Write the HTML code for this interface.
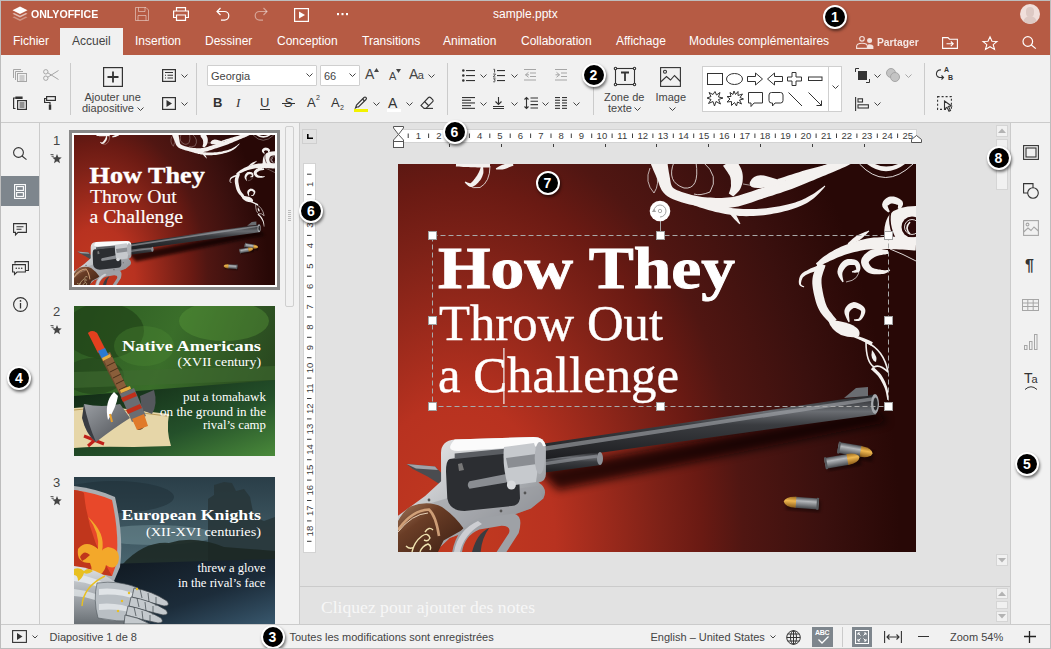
<!DOCTYPE html>
<html><head><meta charset="utf-8">
<style>
*{box-sizing:border-box;margin:0;padding:0}
html,body{width:1051px;height:649px;overflow:hidden;background:#f1f1f1;font-family:"Liberation Sans",sans-serif;color:#444}
.a{position:absolute}
svg{position:absolute;overflow:visible}
#frame{position:absolute;left:0;top:0;width:1051px;height:649px;border:1px solid #bdbdbd;pointer-events:none;z-index:100}
#hdr{left:1px;top:1px;width:1049px;height:54px;background:#b65b44}
#tb{left:1px;top:55px;width:1049px;height:68px;background:#f1f1f1;border-bottom:1px solid #cbcbcb}
#lsb{left:1px;top:123px;width:39px;height:501px;background:#f1f1f1;border-right:1px solid #cbcbcb}
#thumbs{left:40px;top:123px;width:260px;height:501px;background:#f1f1f1;border-right:1px solid #cbcbcb;overflow:hidden}
#edit{left:300px;top:123px;width:710px;height:501px;background:#e2e2e2;overflow:hidden}
#rsb{left:1010px;top:123px;width:40px;height:501px;background:#f1f1f1;border-left:1px solid #cbcbcb}
#status{left:1px;top:624px;width:1049px;height:24px;background:#f1f1f1;border-top:1px solid #cbcbcb}
.tab{position:absolute;top:33.7px;font-size:12px;color:#fff;line-height:14px;white-space:nowrap}
.t11{position:absolute;font-size:11px;line-height:13px;white-space:nowrap;color:#444}
.sep{position:absolute;width:1px;background:#cbcbcb}
.badge{position:absolute;width:24px;height:24px;border-radius:50%;background:#000;border:2px solid #fff;box-shadow:1px 2px 3px rgba(0,0,0,.55);color:#fff;font:bold 14px/20px "Liberation Sans",sans-serif;text-align:center;z-index:50}
</style></head><body>
<div id="frame"></div>
<!-- HEADER -->
<div id="hdr" class="a"></div>
<!-- logo -->
<svg style="left:12px;top:6px" width="16" height="17" viewBox="0 0 16 17">
 <path d="M8 0.5 L15.5 4.3 L8 8.1 L0.5 4.3 Z" fill="#fff"/>
 <path d="M2.2 6.9 L0.5 7.8 L8 11.6 L15.5 7.8 L13.8 6.9 L8 9.8 Z" fill="#fff" opacity=".6"/>
 <path d="M2.2 10.4 L0.5 11.3 L8 15.1 L15.5 11.3 L13.8 10.4 L8 13.3 Z" fill="#fff" opacity=".35"/>
</svg>
<div class="a" style="left:31px;top:7px;font:bold 11.5px/14px 'Liberation Sans',sans-serif;color:#fff;transform:scaleX(0.92);transform-origin:0 0;letter-spacing:0">ONLYOFFICE</div>
<!-- save (faded) -->
<svg style="left:135px;top:7px" width="14" height="14" viewBox="0 0 14 14" fill="none" stroke="#fff" stroke-opacity=".45" stroke-width="1">
 <path d="M0.5 0.5 H11 L13.5 3 V13.5 H0.5 Z"/><path d="M3.5 0.5 V4.5 H10 V0.5"/><path d="M3 13.5 V8.5 H11 V13.5"/>
</svg>
<!-- print -->
<svg style="left:173px;top:7px" width="16" height="14" viewBox="0 0 16 14" fill="none" stroke="#fff" stroke-width="1.2">
 <path d="M3.5 4 V0.6 H12.5 V4"/><path d="M3.5 10.5 H0.6 V4 H15.4 V10.5 H12.5"/><path d="M3.5 8 H12.5 V13.4 H3.5 Z"/>
</svg>
<!-- undo -->
<svg style="left:216px;top:7px" width="14" height="14" viewBox="0 0 14 14" fill="none" stroke="#fff" stroke-width="1.2">
 <path d="M4.5 1 L1 4.5 L4.5 8"/><path d="M1 4.5 H8.5 A4.3 4.3 0 0 1 8.5 13.1 H5"/>
</svg>
<!-- redo faded -->
<svg style="left:254px;top:7px" width="14" height="14" viewBox="0 0 14 14" fill="none" stroke="#fff" stroke-opacity=".45" stroke-width="1.2">
 <path d="M9.5 1 L13 4.5 L9.5 8"/><path d="M13 4.5 H5.5 A4.3 4.3 0 0 0 5.5 13.1 H9"/>
</svg>
<!-- slideshow -->
<svg style="left:294px;top:8px" width="15" height="14" viewBox="0 0 15 14" fill="none" stroke="#fff" stroke-width="1.2">
 <rect x="0.6" y="0.6" width="13.8" height="12.8"/><path d="M5 3.5 L11 7 L5 10.5 Z" fill="#fff" stroke="none"/>
</svg>
<!-- dots -->
<svg style="left:337px;top:13px" width="11" height="3" viewBox="0 0 11 3" fill="#fff">
 <rect x="0" y="0" width="2" height="2.2"/><rect x="4.5" y="0" width="2" height="2.2"/><rect x="9" y="0" width="2" height="2.2"/>
</svg>
<div class="a" style="left:493px;top:7px;font-size:12px;line-height:14px;color:#fff">sample.pptx</div>
<!-- avatar -->
<div class="a" style="left:1020px;top:4px;width:20px;height:20px;border-radius:50%;background:#f0dfdb;overflow:hidden">
 <div class="a" style="left:6px;top:3px;width:8px;height:10px;border-radius:4px;background:#ddc9c4"></div>
 <div class="a" style="left:3px;top:12px;width:14px;height:10px;border-radius:7px 7px 0 0;background:#ddc9c4"></div>
</div>
<!-- TABS -->
<div class="tab" style="left:13px">Fichier</div>
<div class="a" style="left:60px;top:28px;width:63px;height:27px;background:#f1f1f1"></div>
<div class="tab" style="left:72px;color:#444">Accueil</div>
<div class="tab" style="left:135px">Insertion</div>
<div class="tab" style="left:205px">Dessiner</div>
<div class="tab" style="left:277px">Conception</div>
<div class="tab" style="left:362px">Transitions</div>
<div class="tab" style="left:443px">Animation</div>
<div class="tab" style="left:521px">Collaboration</div>
<div class="tab" style="left:616px">Affichage</div>
<div class="tab" style="left:689px">Modules complémentaires</div>
<!-- share icon -->
<svg style="left:856px;top:36px" width="18" height="13" viewBox="0 0 18 13" fill="none" stroke="#f3e2de" stroke-width="1.1">
 <circle cx="6" cy="2.8" r="2.3"/><path d="M0.6 12.4 V10.5 Q0.6 7.2 6 7.2 Q11.4 7.2 11.4 10.5 V12.4 Z"/>
 <circle cx="13.6" cy="4.4" r="2.5" fill="#f3e2de" stroke="none"/><path d="M11.5 13 V9.5 Q11.5 8.2 13.6 8.2 Q16.5 8.2 17.4 10 V13 Z" fill="#f3e2de" stroke="none"/>
</svg>
<div class="a" style="left:877px;top:35px;font:bold 11px/14px 'Liberation Sans',sans-serif;color:rgba(255,255,255,.86);transform:scaleX(0.935);transform-origin:0 0">Partager</div>
<!-- open location -->
<svg style="left:942px;top:37px" width="16" height="12" viewBox="0 0 16 12" fill="none" stroke="#fff" stroke-width="1.1">
 <path d="M0.6 11.4 V0.6 H6 L7.5 2.2 H15.4 V11.4 Z"/><path d="M4.5 6.8 H11 M8.8 4.5 L11.2 6.8 L8.8 9.1"/>
</svg>
<!-- star -->
<svg style="left:982px;top:36px" width="16" height="14" viewBox="0 0 16 14" fill="none" stroke="#fff" stroke-width="1.1">
 <path d="M8 0.8 L10 5.2 L15 5.5 L11.2 8.6 L12.5 13.4 L8 10.7 L3.5 13.4 L4.8 8.6 L1 5.5 L6 5.2 Z"/>
</svg>
<!-- search -->
<svg style="left:1022px;top:36px" width="15" height="13" viewBox="0 0 15 13" fill="none" stroke="#fff" stroke-width="1.2">
 <circle cx="5.8" cy="5.5" r="4.8"/><path d="M9.3 9 L13.8 12.6"/>
</svg>
<div class="badge" style="left:823px;top:5px">1</div>

<!-- TOOLBAR -->
<div id="tb" class="a"></div>
<!-- copy faded -->
<svg style="left:13px;top:69px" width="14" height="13" viewBox="0 0 14 13" fill="none" stroke="#a6a6a6" stroke-width="1">
 <path d="M0.5 9 V0.5 H8"/><path d="M2.5 11 V2.5 H10"/><rect x="4.5" y="4.5" width="9" height="8"/><path d="M6.5 7 H11.5 M6.5 9 H11.5 M6.5 11 H11.5"/>
</svg>
<!-- scissors faded -->
<svg style="left:43px;top:69px" width="16" height="12" viewBox="0 0 16 12" fill="none" stroke="#a6a6a6" stroke-width="1">
 <circle cx="2.8" cy="2.8" r="2.2"/><circle cx="2.8" cy="9.2" r="2.2"/><path d="M4.8 3.8 L15.5 10.5 M4.8 8.2 L15.5 1.5"/>
</svg>
<!-- paste -->
<svg style="left:13px;top:96px" width="14" height="14" viewBox="0 0 14 14" fill="none" stroke="#333" stroke-width="1.2">
 <path d="M2.5 12.5 H0.6 V2 H3"/><path d="M3 1 H9 V2.5 H3 Z" fill="#333"/><rect x="4.6" y="4.6" width="8.8" height="8.8"/><path d="M6.5 7 H11.5 M6.5 9 H11.5 M6.5 11 H11.5"/>
</svg>
<!-- format painter -->
<svg style="left:44px;top:96px" width="12" height="14" viewBox="0 0 12 14" fill="none" stroke="#333" stroke-width="1.2">
 <rect x="2.6" y="0.6" width="8.8" height="3.8"/><path d="M2.6 2.5 H0.6 V6.5 H6 V8.5"/><rect x="4.8" y="8.5" width="2.4" height="5.3" fill="#333" stroke="none"/>
</svg>
<div class="sep" style="left:70px;top:63px;height:52px"></div>
<!-- add slide -->
<svg style="left:103px;top:67px" width="20" height="20" viewBox="0 0 20 20" fill="none" stroke="#333" stroke-width="1.2">
 <rect x="0.6" y="0.6" width="18.8" height="18.8"/><path d="M10 4.5 V15.5 M4.5 10 H15.5" stroke-width="1.8"/>
</svg>
<div class="t11" style="left:84.5px;top:91px">Ajouter une</div>
<div class="t11" style="left:82px;top:102px">diapositive</div>
<svg style="left:137px;top:107px" width="7" height="4" viewBox="0 0 7 4" fill="none" stroke="#444" stroke-width="1"><path d="M0.5 0.5 L3.5 3.5 L6.5 0.5"/></svg>
<!-- layout -->
<svg style="left:162px;top:69px" width="14" height="13" viewBox="0 0 14 13" fill="none" stroke="#333" stroke-width="1.2">
 <rect x="0.6" y="0.6" width="12.8" height="11.8"/><path d="M3 3.5 H11 M3 6.3 H4 M5.5 6.3 H11 M3 9 H4 M5.5 9 H11" stroke-width="1.1"/>
</svg>
<svg style="left:181px;top:74px" width="7" height="4" viewBox="0 0 7 4" fill="none" stroke="#444" stroke-width="1"><path d="M0.5 0.5 L3.5 3.5 L6.5 0.5"/></svg>
<!-- slideshow small -->
<svg style="left:162px;top:97px" width="14" height="13" viewBox="0 0 14 13" fill="none" stroke="#333" stroke-width="1.2">
 <rect x="0.6" y="0.6" width="12.8" height="11.8"/><path d="M4.5 3 L10 6.5 L4.5 10 Z" fill="#333" stroke="none"/>
</svg>
<svg style="left:181px;top:102px" width="7" height="4" viewBox="0 0 7 4" fill="none" stroke="#444" stroke-width="1"><path d="M0.5 0.5 L3.5 3.5 L6.5 0.5"/></svg>
<div class="sep" style="left:196px;top:63px;height:52px"></div>
<!-- font combo -->
<div class="a" style="left:207px;top:65px;width:110px;height:21px;background:#fff;border:1px solid #cfcfcf;border-radius:1px"></div>
<div class="t11" style="left:211px;top:69.5px;color:#444">Georgia</div>
<svg style="left:306px;top:73px" width="7" height="4" viewBox="0 0 7 4" fill="none" stroke="#444" stroke-width="1"><path d="M0.5 0.5 L3.5 3.5 L6.5 0.5"/></svg>
<div class="a" style="left:320px;top:65px;width:40px;height:21px;background:#fff;border:1px solid #cfcfcf;border-radius:1px"></div>
<div class="t11" style="left:324px;top:69.5px;color:#444">66</div>
<svg style="left:349px;top:73px" width="7" height="4" viewBox="0 0 7 4" fill="none" stroke="#444" stroke-width="1"><path d="M0.5 0.5 L3.5 3.5 L6.5 0.5"/></svg>
<!-- A up / A down / Aa -->
<div class="a" style="left:365px;top:67px;font-size:14px;line-height:14px;color:#444">A</div>
<svg style="left:374px;top:68px" width="5" height="4" viewBox="0 0 5 4"><path d="M0 4 L2.5 0 L5 4 Z" fill="#444"/></svg>
<div class="a" style="left:389px;top:70px;font-size:11px;line-height:12px;color:#444">A</div>
<svg style="left:396px;top:69px" width="5" height="4" viewBox="0 0 5 4"><path d="M0 0 L2.5 4 L5 0 Z" fill="#444"/></svg>
<div class="a" style="left:409px;top:67px;font-size:14px;line-height:14px;color:#444;letter-spacing:-0.5px">A<span style="font-size:11px">a</span></div>
<svg style="left:428px;top:74px" width="7" height="4" viewBox="0 0 7 4" fill="none" stroke="#444" stroke-width="1"><path d="M0.5 0.5 L3.5 3.5 L6.5 0.5"/></svg>
<!-- B I U S A2 A2 -->
<div class="a" style="left:213px;top:96px;font:bold 13px/14px 'Liberation Sans',sans-serif;color:#333">B</div>
<div class="a" style="left:236px;top:96px;font:italic 13px/14px 'Liberation Serif',serif;color:#333">I</div>
<div class="a" style="left:260px;top:96px;font:13px/14px 'Liberation Sans',sans-serif;color:#333">U</div>
<div class="a" style="left:260px;top:108.5px;width:10px;height:1px;background:#333"></div>
<div class="a" style="left:284px;top:96px;font:italic 13px/14px 'Liberation Sans',sans-serif;color:#333">S</div>
<div class="a" style="left:282px;top:103px;width:13px;height:1px;background:#333"></div>
<div class="a" style="left:307px;top:96px;font:13px/14px 'Liberation Sans',sans-serif;color:#333">A</div>
<div class="a" style="left:316px;top:94px;font:7px/8px 'Liberation Sans',sans-serif;color:#333">2</div>
<div class="a" style="left:331px;top:96px;font:13px/14px 'Liberation Sans',sans-serif;color:#333">A</div>
<div class="a" style="left:340px;top:104px;font:7px/8px 'Liberation Sans',sans-serif;color:#333">2</div>
<!-- highlight -->
<svg style="left:354px;top:95px" width="14" height="17" viewBox="0 0 14 17" fill="none" stroke="#333" stroke-width="1.1">
 <path d="M3 12 L1.5 13 L2.5 10 L10 2.5 A1.4 1.4 0 0 1 12 4.5 L4.5 12 Z"/><path d="M8.5 4 L10.5 6"/>
 <rect x="0" y="14" width="14" height="3" fill="#f2f200" stroke="none"/>
</svg>
<svg style="left:373px;top:102px" width="7" height="4" viewBox="0 0 7 4" fill="none" stroke="#444" stroke-width="1"><path d="M0.5 0.5 L3.5 3.5 L6.5 0.5"/></svg>
<div class="a" style="left:388px;top:96px;font:14px/14px 'Liberation Sans',sans-serif;color:#333">A</div>
<div class="a" style="left:387px;top:109px;width:14px;height:3px;background:#fff"></div>
<svg style="left:406px;top:102px" width="7" height="4" viewBox="0 0 7 4" fill="none" stroke="#444" stroke-width="1"><path d="M0.5 0.5 L3.5 3.5 L6.5 0.5"/></svg>
<!-- eraser -->
<svg style="left:420px;top:96px" width="14" height="13" viewBox="0 0 14 13" fill="none" stroke="#333" stroke-width="1.1">
 <path d="M4 12.4 L1 9.4 L8.5 1.5 A1.4 1.4 0 0 1 10.5 1.5 L12.7 3.7 A1.4 1.4 0 0 1 12.7 5.7 L6 12.4 Z"/><path d="M4.5 5.5 L9 10"/><path d="M6 12.4 H13"/>
</svg>
<div class="sep" style="left:447px;top:63px;height:52px"></div>
<!-- bullets -->
<svg style="left:462px;top:69px" width="13" height="13" viewBox="0 0 13 13" fill="#333">
 <circle cx="1.3" cy="1.5" r="1.3"/><circle cx="1.3" cy="6.5" r="1.3"/><circle cx="1.3" cy="11.5" r="1.3"/>
 <rect x="4" y="1" width="9" height="1.1"/><rect x="4" y="6" width="9" height="1.1"/><rect x="4" y="11" width="9" height="1.1"/>
</svg>
<svg style="left:480px;top:74px" width="7" height="4" viewBox="0 0 7 4" fill="none" stroke="#444" stroke-width="1"><path d="M0.5 0.5 L3.5 3.5 L6.5 0.5"/></svg>
<!-- numbering -->
<svg style="left:493px;top:69px" width="12" height="13" viewBox="0 0 12 13" fill="#333">
 <rect x="4" y="1" width="8" height="1.1"/><rect x="4" y="6" width="8" height="1.1"/><rect x="4" y="11" width="8" height="1.1"/>
 <path d="M0.5 0.3 H1.6 V3.5" stroke="#333" stroke-width=".9" fill="none"/><path d="M0.2 5 H2.5 L0.3 8 H2.5" stroke="#333" stroke-width=".8" fill="none"/><path d="M0.2 9.8 H2.4 L1.2 11 A1 1 0 1 1 0.2 12.5" stroke="#333" stroke-width=".8" fill="none"/>
</svg>
<svg style="left:511px;top:74px" width="7" height="4" viewBox="0 0 7 4" fill="none" stroke="#444" stroke-width="1"><path d="M0.5 0.5 L3.5 3.5 L6.5 0.5"/></svg>
<!-- indent faded -->
<svg style="left:524px;top:69px" width="12" height="12" viewBox="0 0 12 12" fill="#a6a6a6">
 <rect x="0" y="0" width="12" height="1"/><rect x="6" y="3.5" width="6" height="1"/><rect x="6" y="7" width="6" height="1"/><rect x="0" y="10.5" width="12" height="1"/>
 <path d="M4.5 3.3 L1.5 5.8 L4.5 8.3 M1.5 5.8 H5" stroke="#a6a6a6" stroke-width="1" fill="none"/>
</svg>
<svg style="left:555px;top:69px" width="12" height="12" viewBox="0 0 12 12" fill="#a6a6a6">
 <rect x="0" y="0" width="12" height="1"/><rect x="6" y="3.5" width="6" height="1"/><rect x="6" y="7" width="6" height="1"/><rect x="0" y="10.5" width="12" height="1"/>
 <path d="M1.5 3.3 L4.5 5.8 L1.5 8.3 M0.5 5.8 H4.5" stroke="#a6a6a6" stroke-width="1" fill="none"/>
</svg>
<!-- align left -->
<svg style="left:462px;top:97px" width="13" height="12" viewBox="0 0 13 12" fill="#333">
 <rect x="0" y="0" width="13" height="1.1"/><rect x="0" y="2.7" width="9" height="1.1"/><rect x="0" y="5.4" width="13" height="1.1"/><rect x="0" y="8.1" width="9" height="1.1"/><rect x="0" y="10.8" width="13" height="1.1"/>
</svg>
<svg style="left:480px;top:102px" width="7" height="4" viewBox="0 0 7 4" fill="none" stroke="#444" stroke-width="1"><path d="M0.5 0.5 L3.5 3.5 L6.5 0.5"/></svg>
<!-- valign bottom -->
<svg style="left:493px;top:97px" width="11" height="12" viewBox="0 0 11 12" fill="none" stroke="#333" stroke-width="1.1">
 <path d="M5.5 0 V7.5 M2.5 4.5 L5.5 7.5 L8.5 4.5"/><path d="M0 9.5 H11 M0 11.5 H11"/>
</svg>
<svg style="left:511px;top:102px" width="7" height="4" viewBox="0 0 7 4" fill="none" stroke="#444" stroke-width="1"><path d="M0.5 0.5 L3.5 3.5 L6.5 0.5"/></svg>
<!-- line spacing -->
<svg style="left:524px;top:97px" width="14" height="12" viewBox="0 0 14 12" fill="none" stroke="#333" stroke-width="1.1">
 <path d="M2.5 0.5 V11.5 M0.5 2.5 L2.5 0.5 L4.5 2.5 M0.5 9.5 L2.5 11.5 L4.5 9.5"/><path d="M6.5 1 H14 M6.5 4.3 H14 M6.5 7.6 H14 M6.5 11 H14"/>
</svg>
<svg style="left:542px;top:102px" width="7" height="4" viewBox="0 0 7 4" fill="none" stroke="#444" stroke-width="1"><path d="M0.5 0.5 L3.5 3.5 L6.5 0.5"/></svg>
<!-- columns -->
<svg style="left:555px;top:97px" width="12" height="12" viewBox="0 0 12 12" fill="#333">
 <rect x="0" y="0" width="5" height="1.1"/><rect x="0" y="2.7" width="5" height="1.1"/><rect x="0" y="5.4" width="5" height="1.1"/><rect x="0" y="8.1" width="5" height="1.1"/><rect x="0" y="10.8" width="5" height="1.1"/>
 <rect x="7" y="0" width="5" height="1.1"/><rect x="7" y="2.7" width="5" height="1.1"/><rect x="7" y="5.4" width="5" height="1.1"/><rect x="7" y="8.1" width="5" height="1.1"/><rect x="7" y="10.8" width="5" height="1.1"/>
</svg>
<svg style="left:573px;top:102px" width="7" height="4" viewBox="0 0 7 4" fill="none" stroke="#444" stroke-width="1"><path d="M0.5 0.5 L3.5 3.5 L6.5 0.5"/></svg>
<div class="sep" style="left:593px;top:63px;height:52px"></div>
<div class="badge" style="left:581.5px;top:63px">2</div>
<!-- text box -->
<svg style="left:614px;top:67px" width="22" height="19" viewBox="0 0 22 19" fill="none" stroke="#333" stroke-width="1.1">
 <rect x="1.5" y="1.5" width="19" height="16"/>
 <circle cx="1.5" cy="1.5" r="1.2" fill="#f1f1f1"/><circle cx="20.5" cy="1.5" r="1.2" fill="#f1f1f1"/><circle cx="1.5" cy="17.5" r="1.2" fill="#f1f1f1"/><circle cx="20.5" cy="17.5" r="1.2" fill="#f1f1f1"/>
 <path d="M7 5.5 H15 M11 5.5 V14" stroke-width="1.8"/>
</svg>
<div class="t11" style="left:604px;top:91px">Zone de</div>
<div class="t11" style="left:608px;top:102px">texte</div>
<svg style="left:634px;top:107px" width="7" height="4" viewBox="0 0 7 4" fill="none" stroke="#444" stroke-width="1"><path d="M0.5 0.5 L3.5 3.5 L6.5 0.5"/></svg>
<!-- image -->
<svg style="left:660px;top:67px" width="21" height="20" viewBox="0 0 21 20" fill="none" stroke="#333" stroke-width="1.1">
 <rect x="0.6" y="0.6" width="19.8" height="18.8"/><circle cx="5" cy="4.8" r="1.5"/><path d="M0.6 15 L6.5 9.5 L10.5 13 L14.5 8.5 L20.4 14.5"/>
</svg>
<div class="t11" style="left:655.5px;top:91px">Image</div>
<svg style="left:669px;top:107px" width="7" height="4" viewBox="0 0 7 4" fill="none" stroke="#444" stroke-width="1"><path d="M0.5 0.5 L3.5 3.5 L6.5 0.5"/></svg>
<!-- shapes gallery -->
<div class="a" style="left:702px;top:66px;width:140px;height:46px;background:#fff;border:1px solid #cfcfcf"></div>
<div class="a" style="left:828px;top:66px;width:1px;height:46px;background:#cfcfcf"></div>
<svg style="left:832px;top:85px" width="7" height="4" viewBox="0 0 7 4" fill="none" stroke="#444" stroke-width="1"><path d="M0.5 0.5 L3.5 3.5 L6.5 0.5"/></svg>
<svg style="left:706px;top:72px" width="120" height="36" viewBox="0 0 120 36" fill="none" stroke="#333" stroke-width="1">
 <rect x="1.5" y="1.5" width="15" height="11"/>
 <ellipse cx="28.5" cy="7" rx="8" ry="5.5"/>
 <path d="M41.5 4.5 H49.5 V1 L56.5 7 L49.5 13 V9.5 H41.5 Z"/>
 <path d="M76.5 4.5 H68.5 V1 L61.5 7 L68.5 13 V9.5 H76.5 Z"/>
 <path d="M86 0.5 H90 V5 H95.5 V9 H90 V13.5 H86 V9 H81.5 V5 H86 Z"/>
 <rect x="102.5" y="5" width="13.5" height="3.5"/>
 <path d="M9 19.5 L10.5 23 L14 20.5 L12.5 25 L17 26 L12.5 27.5 L14.5 32 L10 29.5 L8.5 34 L7 29.5 L2.5 31.5 L5 27.5 L1 26 L5 24.5 L3 20.5 L7 22.5 Z"/>
 <path d="M28 19 L29.5 22.5 L32 19.5 L32 23.5 L36.5 22 L34 25.5 L37.5 27 L33.5 28 L35.5 32 L31.5 30 L30.5 34 L28.5 30.5 L25.5 33.5 L25.5 29.5 L21 30 L24 27 L21 24.5 L25 24.5 L24 20.5 L27 22.5 Z"/>
 <path d="M42.5 20.5 H56.5 V31 H48 L45 34.5 V31 H42.5 Z"/>
 <path d="M65.5 20.5 H74.5 A2.5 2.5 0 0 1 77 23 V28.5 A2.5 2.5 0 0 1 74.5 31 H69 L66.5 34 V31 H65.5 A2.5 2.5 0 0 1 63 28.5 V23 A2.5 2.5 0 0 1 65.5 20.5 Z"/>
 <path d="M82.5 20.5 L96 34"/>
 <path d="M102.5 20.5 L115.5 33.5 M115.5 28.5 V33.5 H110.5"/>
</svg>
<!-- arrange -->
<svg style="left:855px;top:68px" width="15" height="15" viewBox="0 0 15 15" fill="none" stroke="#333" stroke-width="1">
 <path d="M0.5 4 V0.5 H4"/><path d="M14.5 11 V14.5 H11"/><rect x="3.5" y="3.5" width="8" height="8" fill="#333"/>
</svg>
<svg style="left:874px;top:74px" width="7" height="4" viewBox="0 0 7 4" fill="none" stroke="#444" stroke-width="1"><path d="M0.5 0.5 L3.5 3.5 L6.5 0.5"/></svg>
<!-- merge faded -->
<svg style="left:886px;top:68px" width="14" height="14" viewBox="0 0 14 14" fill="#c4c4c4" stroke="#a6a6a6" stroke-width="1">
 <circle cx="5" cy="5" r="4.5"/><circle cx="9" cy="9" r="4.5"/>
</svg>
<svg style="left:905px;top:74px" width="7" height="4" viewBox="0 0 7 4" fill="none" stroke="#a6a6a6" stroke-width="1"><path d="M0.5 0.5 L3.5 3.5 L6.5 0.5"/></svg>
<!-- align shapes -->
<svg style="left:855px;top:97px" width="14" height="14" viewBox="0 0 14 14" fill="none" stroke="#333" stroke-width="1.1">
 <path d="M0.6 0 V14"/><rect x="3" y="1.8" width="4.5" height="3.2"/><rect x="3" y="7.8" width="10.4" height="3.2"/>
</svg>
<svg style="left:874px;top:102px" width="7" height="4" viewBox="0 0 7 4" fill="none" stroke="#444" stroke-width="1"><path d="M0.5 0.5 L3.5 3.5 L6.5 0.5"/></svg>
<div class="sep" style="left:924px;top:63px;height:52px"></div>
<!-- replace -->
<svg style="left:937px;top:67px" width="16" height="15" viewBox="0 0 16 15" fill="none" stroke="#333" stroke-width="1.1">
 <path d="M4 3 A3.5 3.5 0 0 0 2.5 10.5 H6.5 M4.5 8.5 L6.5 10.5 L4.5 12.5"/>
</svg>
<div class="a" style="left:944px;top:66px;font:bold 7px/8px 'Liberation Sans',sans-serif;color:#333">A</div>
<div class="a" style="left:948px;top:74px;font:bold 7px/8px 'Liberation Sans',sans-serif;color:#333">B</div>
<!-- select -->
<svg style="left:937px;top:96px" width="16" height="16" viewBox="0 0 16 16" fill="none" stroke="#333" stroke-width="1.1">
 <rect x="0.6" y="0.6" width="13.8" height="12.8" stroke-dasharray="2 2"/><path d="M7.5 5 L14.5 10 L11.5 10.5 L13.5 14.5 L12 15.3 L10 11.3 L7.5 13 Z" fill="#f1f1f1"/>
</svg>


<!-- LEFT SIDEBAR -->
<div id="lsb" class="a"></div>
<svg style="left:13px;top:147px" width="14" height="13" viewBox="0 0 14 13" fill="none" stroke="#333" stroke-width="1.1">
 <circle cx="5.5" cy="5.5" r="4.9"/><path d="M9 9 L13.5 12.6"/>
</svg>
<div class="a" style="left:1px;top:176px;width:38px;height:30px;background:#7e868d"></div>
<svg style="left:14px;top:184px" width="12" height="15" viewBox="0 0 12 15" fill="none" stroke="#fff" stroke-width="1.1">
 <rect x="0.6" y="0.6" width="10.8" height="13.8"/><rect x="2.6" y="2.6" width="6.8" height="3.8"/><rect x="2.6" y="8.6" width="6.8" height="3.8"/>
</svg>
<svg style="left:13px;top:223px" width="14" height="13" viewBox="0 0 14 13" fill="none" stroke="#333" stroke-width="1.1">
 <path d="M0.6 0.6 H13.4 V9.4 H5 L2.5 12 V9.4 H0.6 Z"/><path d="M3.5 3.7 H10.5 M3.5 6.3 H8.5"/>
</svg>
<svg style="left:12px;top:261px" width="17" height="14" viewBox="0 0 17 14" fill="none" stroke="#333" stroke-width="1.1">
 <path d="M3 2.5 V0.6 H16.4 V9.5 H14"/><path d="M0.6 3.6 H13.4 V11 H5 L2.5 13.4 V11 H0.6 Z"/>
 <circle cx="4.3" cy="7.3" r=".8" fill="#333" stroke="none"/><circle cx="7" cy="7.3" r=".8" fill="#333" stroke="none"/><circle cx="9.7" cy="7.3" r=".8" fill="#333" stroke="none"/>
</svg>
<svg style="left:13px;top:297px" width="15" height="15" viewBox="0 0 15 15" fill="none" stroke="#333" stroke-width="1.1">
 <circle cx="7.5" cy="7.5" r="6.9"/><path d="M7.5 6 V11.5" stroke-width="1.3"/><circle cx="7.5" cy="3.9" r=".85" fill="#333" stroke="none"/>
</svg>
<div class="badge" style="left:7px;top:366px">4</div>

<!-- THUMBNAILS PANEL -->
<div id="thumbs" class="a"></div>
<div class="a" style="left:53px;top:134px;font:13px/14px 'Liberation Sans',sans-serif;color:#444">1</div>
<div class="a" style="left:53px;top:305px;font:13px/14px 'Liberation Sans',sans-serif;color:#444">2</div>
<div class="a" style="left:53px;top:476px;font:13px/14px 'Liberation Sans',sans-serif;color:#444">3</div>
<svg style="left:50px;top:152px" width="12" height="12" viewBox="0 0 12 12"><path d="M0.5 2.6 H3.5 M1.5 4.3 H3.8" stroke="#444" stroke-width=".9"/><path d="M7 2 L8.3 5.3 L11.7 5.5 L9.1 7.7 L10 11.2 L7 9.3 L4 11.2 L4.9 7.7 L2.3 5.5 L5.7 5.3 Z" fill="#444"/></svg>
<svg style="left:50px;top:323px" width="12" height="12" viewBox="0 0 12 12"><path d="M0.5 2.6 H3.5 M1.5 4.3 H3.8" stroke="#444" stroke-width=".9"/><path d="M7 2 L8.3 5.3 L11.7 5.5 L9.1 7.7 L10 11.2 L7 9.3 L4 11.2 L4.9 7.7 L2.3 5.5 L5.7 5.3 Z" fill="#444"/></svg>
<svg style="left:50px;top:494px" width="12" height="12" viewBox="0 0 12 12"><path d="M0.5 2.6 H3.5 M1.5 4.3 H3.8" stroke="#444" stroke-width=".9"/><path d="M7 2 L8.3 5.3 L11.7 5.5 L9.1 7.7 L10 11.2 L7 9.3 L4 11.2 L4.9 7.7 L2.3 5.5 L5.7 5.3 Z" fill="#444"/></svg>
<!-- thumb 1 frame -->
<div class="a" style="left:69px;top:130px;width:211px;height:160px;border:3px solid #888;background:#fff"></div>
<div id="th1" class="a" style="left:74px;top:135px;width:201px;height:150px;overflow:hidden;background:#5a1a12"><svg style="left:0;top:0" width="201" height="150.6" viewBox="0 0 518 388"><use href="#slideArt" width="518" height="388"/></svg></div>
<div id="th2" class="a" style="left:74px;top:306px;width:201px;height:150px;overflow:hidden"><svg style="left:0;top:0" width="201" height="150" viewBox="0 0 201 150">
<defs>
<linearGradient id="g2top" x1="0" y1="0" x2="1" y2="0.3"><stop offset="0" stop-color="#2c5a22"/><stop offset=".5" stop-color="#3a6e2a"/><stop offset="1" stop-color="#2a4a20"/></linearGradient>
<linearGradient id="g2bot" x1="0" y1="0" x2="1" y2="1"><stop offset="0" stop-color="#0f2412"/><stop offset=".6" stop-color="#24502a"/><stop offset="1" stop-color="#4a8a3a"/></linearGradient>
<linearGradient id="axeG" x1="0" y1="0" x2="1" y2="1"><stop offset="0" stop-color="#9a9ea3"/><stop offset="1" stop-color="#4a4d52"/></linearGradient>
</defs>
<rect width="201" height="150" fill="url(#g2top)"/>
<ellipse cx="30" cy="25" rx="40" ry="28" fill="#1e3e16" opacity=".6"/><ellipse cx="70" cy="40" rx="30" ry="20" fill="#4d8a34" opacity=".35"/>
<ellipse cx="150" cy="15" rx="45" ry="20" fill="#5a9a3a" opacity=".4"/>
<ellipse cx="20" cy="70" rx="30" ry="18" fill="#1e3a18" opacity=".5"/>
<path d="M0 66 L201 60 L201 74 L0 82 Z" fill="#3f6a30" opacity=".6"/>
<path d="M0 90 L201 74 L201 150 L0 150 Z" fill="url(#g2bot)"/>
<path d="M0 102 Q30 98 60 104 L95 108 Q92 125 97 140 L60 141 Q20 140 0 142 Z" fill="#e6d6a8"/>
<path d="M0 104 Q30 100 60 106 L93 110" fill="none" stroke="#b89a5a" stroke-width="1"/>
<path d="M10 130 L30 138 M28 128 L14 140" stroke="#c0201a" stroke-width="3"/>
<path d="M66 90 L80 84 Q84 98 78 108 L68 104 Z" fill="#55585d"/>
<path d="M10 98 Q28 102 46 98 L56 112 Q40 122 22 136 Q6 124 10 98 Z" fill="url(#axeG)"/>
<path d="M10 98 Q14 118 22 136 Q12 128 8 112 Z" fill="#3a3d42"/>
<path d="M14 27 Q18 23 23 27 L71 118 Q70 124 64 124 Z" fill="#6e4a2c"/>
<path d="M28 50 L36 46 L56 88 L48 92 Z" fill="#8a5e3a"/>
<path d="M30 54 L38 50 M33 60 L41 56 M36 66 L44 62 M39 72 L47 68 M42 78 L50 74 M45 84 L53 80" stroke="#4a2e18" stroke-width="1"/>
<path d="M14 27 Q18 23 23 27 L31 43 L24 47 Z" fill="#e2401e"/>
<path d="M24 45 L31 42 L35 50 L28 53 Z" fill="#2a7ad0"/>
<path d="M28 52 L36 48 L37 51 L29 55 Z" fill="#e8b040"/>
<path d="M46 84 L56 80 L57 83 L47 87 Z" fill="#e8b040"/>
<path d="M46 88 L60 82 L72 110 L58 116 Z" fill="#6a6d72"/>
<path d="M47 92 L61 86 L63 90 L49 96 Z" fill="#c0301a"/>
<path d="M52 104 L66 98 L68 102 L54 108 Z" fill="#c0301a"/>
<path d="M58 113 L70 108 L74 120 L63 124 Z" fill="#e07a2a"/>
<path d="M40 86 Q30 96 34 114 Q42 102 44 90 Z" fill="#fff"/>
<path d="M36 108 L38 116" stroke="#e8a030" stroke-width="2"/>
<text x="187" y="44.6" text-anchor="end" font-family="Liberation Serif" font-weight="bold" font-size="15" fill="#fff" textLength="139" lengthAdjust="spacingAndGlyphs">Native Americans</text>
<text x="187" y="59.6" text-anchor="end" font-family="Liberation Serif" font-size="13.5" fill="#fff" textLength="83.5" lengthAdjust="spacingAndGlyphs">(XVII century)</text>
<text x="192" y="94.7" text-anchor="end" font-family="Liberation Serif" font-size="13" fill="#fff" textLength="83" lengthAdjust="spacingAndGlyphs">put a tomahawk</text>
<text x="192" y="109.7" text-anchor="end" font-family="Liberation Serif" font-size="13" fill="#fff" textLength="106" lengthAdjust="spacingAndGlyphs">on the ground in the</text>
<text x="192" y="122.5" text-anchor="end" font-family="Liberation Serif" font-size="13" fill="#fff" textLength="63" lengthAdjust="spacingAndGlyphs">rival’s camp</text>
</svg></div>
<div id="th3" class="a" style="left:74px;top:477px;width:201px;height:147px;overflow:hidden"><svg style="left:0;top:0" width="201" height="150" viewBox="0 0 201 150">
<defs>
<linearGradient id="g3top" x1="0" y1="0" x2="0" y2="1"><stop offset="0" stop-color="#2a3e48"/><stop offset=".6" stop-color="#4a6670"/><stop offset="1" stop-color="#324a52"/></linearGradient>
<linearGradient id="g3bot" x1="0" y1="0" x2="1" y2="1"><stop offset="0" stop-color="#0e151c"/><stop offset=".6" stop-color="#1c2c3a"/><stop offset="1" stop-color="#3a5a70"/></linearGradient>
<linearGradient id="armG" x1="0" y1="0" x2="0" y2="1"><stop offset="0" stop-color="#e0e3e6"/><stop offset=".5" stop-color="#a6abb0"/><stop offset="1" stop-color="#6a7075"/></linearGradient>
</defs>
<rect width="201" height="150" fill="url(#g3top)"/>
<ellipse cx="80" cy="58" rx="60" ry="10" fill="#7a98a0" opacity=".45"/>
<ellipse cx="40" cy="20" rx="60" ry="16" fill="#1e2e36" opacity=".5"/>
<path d="M134 85 L134 22 L140 18 L140 8 L150 5 L158 6 L162 14 L170 12 L176 20 L180 40 L190 44 L201 40 L201 85 Z" fill="#28363a" opacity=".9"/>
<path d="M48 88 Q70 64 95 66 Q120 58 150 70 L201 74 L201 88 Z" fill="#1c2824" opacity=".9"/>
<path d="M0 88 L201 82 L201 150 L0 150 Z" fill="url(#g3bot)"/>
<path d="M0 9 Q24 12 41 20 Q50 60 46 90 L40 104 Q20 100 0 94 Z" fill="#a9aeb2"/>
<path d="M0 13 Q22 16 38 23 Q46 60 42 88 L38 99 Q18 96 0 92 Z" fill="#e8482a"/>
<path d="M0 13 Q8 14 10 16 Q14 60 38 99 Q18 96 0 92 Z" fill="#c0361c"/>
<path d="M14 40 Q26 56 24 72 Q12 62 4 72 Q2 86 16 86 Q20 94 14 102 Q30 100 32 88 Q40 94 44 86 Q48 72 34 70 Q28 72 28 74 Q32 56 14 40 Z" fill="#f3a82a"/>
<path d="M6 80 Q10 72 16 78 Q12 82 8 84 Z" fill="#c0361c"/>
<path d="M0 89 Q22 91 43 106 L52 147 L0 147 Z" fill="url(#armG)"/>
<path d="M0 97 Q22 99 41 113 L42 120 Q22 106 0 104 Z" fill="#e2e6e9"/>
<path d="M0 112 Q22 114 43 128 L44 134 Q22 120 0 119 Z" fill="#dfe3e6" opacity=".8"/>
<path d="M8 129 Q9 110 31 99" fill="none" stroke="#e8c020" stroke-width="1.4"/>
<path d="M0 92 Q6 90 10 94 Q14 90 19 94 Q14 98 10 96 Q8 102 4 104 Q4 98 0 98 Z" fill="#e8c020"/>
<path d="M23 106 Q45 103 64 111 L62 144 Q42 145 24 141 Q19 123 23 106 Z" fill="#b9bfc4" stroke="#4e555b" stroke-width=".6"/>
<path d="M25 112 Q45 110 63 118 L63 123 Q45 116 25 118 Z" fill="#e0e4e7"/>
<path d="M25 127 Q45 125 62 133 L62 137 Q45 131 25 133 Z" fill="#dde1e4"/>
<g fill="#c4c9cd" stroke="#3e454b" stroke-width=".7">
<path d="M60 111 Q78 114 93 124 Q97 129 90 129 Q74 125 58 120 Z"/>
<path d="M57 120 Q76 123 92 133 Q96 138 89 138 Q72 134 55 129 Z"/>
<path d="M54 129 Q72 132 87 141 Q91 146 84 146 Q68 143 52 138 Z"/>
<path d="M51 138 Q64 140 76 147 L50 147 Z"/>
<path d="M66 112 L68 121 M74 116 L75 125 M82 120 L82 129 M63 121 L65 130 M71 125 L72 134 M79 129 L79 138 M60 130 L62 139 M68 134 L69 143 M76 138 L76 146"/>
</g>
<circle cx="63" cy="112" r="1.2" fill="#e8c020"/><circle cx="55" cy="116" r="1.2" fill="#e8c020"/><circle cx="48" cy="124" r="1.2" fill="#e8c020"/><circle cx="44" cy="134" r="1.2" fill="#e8c020"/>
<text x="187" y="43" text-anchor="end" font-family="Liberation Serif" font-weight="bold" font-size="15" fill="#fff" textLength="139.4" lengthAdjust="spacingAndGlyphs">European Knights</text>
<text x="187" y="59.4" text-anchor="end" font-family="Liberation Serif" font-size="13.5" fill="#fff" textLength="115" lengthAdjust="spacingAndGlyphs">(XII-XVI centuries)</text>
<text x="191.5" y="94.7" text-anchor="end" font-family="Liberation Serif" font-size="13" fill="#fff" textLength="68" lengthAdjust="spacingAndGlyphs">threw a glove</text>
<text x="191.5" y="110.4" text-anchor="end" font-family="Liberation Serif" font-size="13" fill="#fff" textLength="87.5" lengthAdjust="spacingAndGlyphs">in the rival’s face</text>
</svg></div>
<!-- thumbs scrollbar -->
<div class="a" style="left:285px;top:126px;width:9px;height:181px;border:1px solid #cfcfcf;border-radius:2px;background:#f1f1f1"></div>
<svg style="left:288px;top:210px" width="3" height="12" viewBox="0 0 3 12" fill="#bbb"><rect y="0" width="3" height="1"/><rect y="2" width="3" height="1"/><rect y="4" width="3" height="1"/><rect y="6" width="3" height="1"/><rect y="8" width="3" height="1"/><rect y="10" width="3" height="1"/></svg>

<!-- EDITOR -->
<div id="edit" class="a"></div>
<!-- ruler corner -->
<div class="a" style="left:302px;top:129px;width:15px;height:15px;border:1px solid #cfcfcf;background:#e2e2e2"></div>
<svg style="left:307px;top:134px" width="6" height="5" viewBox="0 0 6 5" fill="#000"><path d="M0 0 H1.6 V3.4 H6 V5 H0 Z"/></svg>
<!-- horizontal ruler -->
<div class="a" style="left:397px;top:129px;width:520px;height:14px;border:1px solid #d3d3d3;background:#fff"></div>
<svg style="left:398px;top:130px" width="518" height="12" viewBox="0 0 518 12"><text x="20.4" y="9" font-family="Liberation Sans" font-size="9.5" fill="#3c3c3c" text-anchor="middle">1</text><text x="40.8" y="9" font-family="Liberation Sans" font-size="9.5" fill="#3c3c3c" text-anchor="middle">2</text><text x="61.2" y="9" font-family="Liberation Sans" font-size="9.5" fill="#3c3c3c" text-anchor="middle">3</text><text x="81.6" y="9" font-family="Liberation Sans" font-size="9.5" fill="#3c3c3c" text-anchor="middle">4</text><text x="102.0" y="9" font-family="Liberation Sans" font-size="9.5" fill="#3c3c3c" text-anchor="middle">5</text><text x="122.4" y="9" font-family="Liberation Sans" font-size="9.5" fill="#3c3c3c" text-anchor="middle">6</text><text x="142.8" y="9" font-family="Liberation Sans" font-size="9.5" fill="#3c3c3c" text-anchor="middle">7</text><text x="163.1" y="9" font-family="Liberation Sans" font-size="9.5" fill="#3c3c3c" text-anchor="middle">8</text><text x="183.5" y="9" font-family="Liberation Sans" font-size="9.5" fill="#3c3c3c" text-anchor="middle">9</text><text x="203.9" y="9" font-family="Liberation Sans" font-size="9.5" fill="#3c3c3c" text-anchor="middle">10</text><text x="224.3" y="9" font-family="Liberation Sans" font-size="9.5" fill="#3c3c3c" text-anchor="middle">11</text><text x="244.7" y="9" font-family="Liberation Sans" font-size="9.5" fill="#3c3c3c" text-anchor="middle">12</text><text x="265.1" y="9" font-family="Liberation Sans" font-size="9.5" fill="#3c3c3c" text-anchor="middle">13</text><text x="285.5" y="9" font-family="Liberation Sans" font-size="9.5" fill="#3c3c3c" text-anchor="middle">14</text><text x="305.9" y="9" font-family="Liberation Sans" font-size="9.5" fill="#3c3c3c" text-anchor="middle">15</text><text x="326.3" y="9" font-family="Liberation Sans" font-size="9.5" fill="#3c3c3c" text-anchor="middle">16</text><text x="346.7" y="9" font-family="Liberation Sans" font-size="9.5" fill="#3c3c3c" text-anchor="middle">17</text><text x="367.1" y="9" font-family="Liberation Sans" font-size="9.5" fill="#3c3c3c" text-anchor="middle">18</text><text x="387.5" y="9" font-family="Liberation Sans" font-size="9.5" fill="#3c3c3c" text-anchor="middle">19</text><text x="407.9" y="9" font-family="Liberation Sans" font-size="9.5" fill="#3c3c3c" text-anchor="middle">20</text><text x="428.3" y="9" font-family="Liberation Sans" font-size="9.5" fill="#3c3c3c" text-anchor="middle">21</text><text x="448.7" y="9" font-family="Liberation Sans" font-size="9.5" fill="#3c3c3c" text-anchor="middle">22</text><text x="469.1" y="9" font-family="Liberation Sans" font-size="9.5" fill="#3c3c3c" text-anchor="middle">23</text><text x="489.4" y="9" font-family="Liberation Sans" font-size="9.5" fill="#3c3c3c" text-anchor="middle">24</text><text x="509.8" y="9" font-family="Liberation Sans" font-size="9.5" fill="#3c3c3c" text-anchor="middle">25</text><rect x="9.7" y="3.5" width="1" height="4.5" fill="#3c3c3c"/><rect x="30.1" y="3.5" width="1" height="4.5" fill="#3c3c3c"/><rect x="50.5" y="3.5" width="1" height="4.5" fill="#3c3c3c"/><rect x="70.9" y="3.5" width="1" height="4.5" fill="#3c3c3c"/><rect x="91.3" y="3.5" width="1" height="4.5" fill="#3c3c3c"/><rect x="111.7" y="3.5" width="1" height="4.5" fill="#3c3c3c"/><rect x="132.1" y="3.5" width="1" height="4.5" fill="#3c3c3c"/><rect x="152.5" y="3.5" width="1" height="4.5" fill="#3c3c3c"/><rect x="172.8" y="3.5" width="1" height="4.5" fill="#3c3c3c"/><rect x="193.2" y="3.5" width="1" height="4.5" fill="#3c3c3c"/><rect x="213.6" y="3.5" width="1" height="4.5" fill="#3c3c3c"/><rect x="234.0" y="3.5" width="1" height="4.5" fill="#3c3c3c"/><rect x="254.4" y="3.5" width="1" height="4.5" fill="#3c3c3c"/><rect x="274.8" y="3.5" width="1" height="4.5" fill="#3c3c3c"/><rect x="295.2" y="3.5" width="1" height="4.5" fill="#3c3c3c"/><rect x="315.6" y="3.5" width="1" height="4.5" fill="#3c3c3c"/><rect x="336.0" y="3.5" width="1" height="4.5" fill="#3c3c3c"/><rect x="356.4" y="3.5" width="1" height="4.5" fill="#3c3c3c"/><rect x="376.8" y="3.5" width="1" height="4.5" fill="#3c3c3c"/><rect x="397.2" y="3.5" width="1" height="4.5" fill="#3c3c3c"/><rect x="417.6" y="3.5" width="1" height="4.5" fill="#3c3c3c"/><rect x="438.0" y="3.5" width="1" height="4.5" fill="#3c3c3c"/><rect x="458.4" y="3.5" width="1" height="4.5" fill="#3c3c3c"/><rect x="478.8" y="3.5" width="1" height="4.5" fill="#3c3c3c"/><rect x="499.1" y="3.5" width="1" height="4.5" fill="#3c3c3c"/></svg>
<div class="a" style="left:449.2px;top:143.5px;width:1px;height:3.5px;background:#3c3c3c"></div>
<div class="a" style="left:501.0px;top:143.5px;width:1px;height:3.5px;background:#3c3c3c"></div>
<div class="a" style="left:552.8px;top:143.5px;width:1px;height:3.5px;background:#3c3c3c"></div>
<div class="a" style="left:604.6px;top:143.5px;width:1px;height:3.5px;background:#3c3c3c"></div>
<div class="a" style="left:656.4px;top:143.5px;width:1px;height:3.5px;background:#3c3c3c"></div>
<div class="a" style="left:708.2px;top:143.5px;width:1px;height:3.5px;background:#3c3c3c"></div>
<div class="a" style="left:760.0px;top:143.5px;width:1px;height:3.5px;background:#3c3c3c"></div>
<div class="a" style="left:811.8px;top:143.5px;width:1px;height:3.5px;background:#3c3c3c"></div>
<div class="a" style="left:863.6px;top:143.5px;width:1px;height:3.5px;background:#3c3c3c"></div>
<svg style="left:393px;top:126px" width="11" height="22" viewBox="0 0 11 22" fill="#fff" stroke="#555" stroke-width="1"><path d="M0.5 0.5 H10.5 V2 L5.5 8.5 L0.5 2 Z"/><path d="M5.5 8.5 L10.5 14 V15.5 H0.5 V14 Z"/><rect x="0.5" y="15.5" width="10" height="6"/></svg>
<svg style="left:911px;top:135px" width="11" height="8" viewBox="0 0 11 8" fill="#fff" stroke="#555" stroke-width="1"><path d="M0.5 7.5 V4.5 L5.5 0.5 L10.5 4.5 V7.5 Z"/></svg>
<div class="a" style="left:303px;top:163px;width:13px;height:390px;border:1px solid #d3d3d3;background:#fff"></div>
<svg style="left:304px;top:164px" width="11" height="388" viewBox="0 0 11 388"><text x="0" y="0" transform="translate(8.5 20.4) rotate(-90)" font-family="Liberation Sans" font-size="9.5" fill="#3c3c3c" text-anchor="middle">1</text><text x="0" y="0" transform="translate(8.5 40.8) rotate(-90)" font-family="Liberation Sans" font-size="9.5" fill="#3c3c3c" text-anchor="middle">2</text><text x="0" y="0" transform="translate(8.5 61.2) rotate(-90)" font-family="Liberation Sans" font-size="9.5" fill="#3c3c3c" text-anchor="middle">3</text><text x="0" y="0" transform="translate(8.5 81.6) rotate(-90)" font-family="Liberation Sans" font-size="9.5" fill="#3c3c3c" text-anchor="middle">4</text><text x="0" y="0" transform="translate(8.5 102.0) rotate(-90)" font-family="Liberation Sans" font-size="9.5" fill="#3c3c3c" text-anchor="middle">5</text><text x="0" y="0" transform="translate(8.5 122.4) rotate(-90)" font-family="Liberation Sans" font-size="9.5" fill="#3c3c3c" text-anchor="middle">6</text><text x="0" y="0" transform="translate(8.5 142.8) rotate(-90)" font-family="Liberation Sans" font-size="9.5" fill="#3c3c3c" text-anchor="middle">7</text><text x="0" y="0" transform="translate(8.5 163.1) rotate(-90)" font-family="Liberation Sans" font-size="9.5" fill="#3c3c3c" text-anchor="middle">8</text><text x="0" y="0" transform="translate(8.5 183.5) rotate(-90)" font-family="Liberation Sans" font-size="9.5" fill="#3c3c3c" text-anchor="middle">9</text><text x="0" y="0" transform="translate(8.5 203.9) rotate(-90)" font-family="Liberation Sans" font-size="9.5" fill="#3c3c3c" text-anchor="middle">10</text><text x="0" y="0" transform="translate(8.5 224.3) rotate(-90)" font-family="Liberation Sans" font-size="9.5" fill="#3c3c3c" text-anchor="middle">11</text><text x="0" y="0" transform="translate(8.5 244.7) rotate(-90)" font-family="Liberation Sans" font-size="9.5" fill="#3c3c3c" text-anchor="middle">12</text><text x="0" y="0" transform="translate(8.5 265.1) rotate(-90)" font-family="Liberation Sans" font-size="9.5" fill="#3c3c3c" text-anchor="middle">13</text><text x="0" y="0" transform="translate(8.5 285.5) rotate(-90)" font-family="Liberation Sans" font-size="9.5" fill="#3c3c3c" text-anchor="middle">14</text><text x="0" y="0" transform="translate(8.5 305.9) rotate(-90)" font-family="Liberation Sans" font-size="9.5" fill="#3c3c3c" text-anchor="middle">15</text><text x="0" y="0" transform="translate(8.5 326.3) rotate(-90)" font-family="Liberation Sans" font-size="9.5" fill="#3c3c3c" text-anchor="middle">16</text><text x="0" y="0" transform="translate(8.5 346.7) rotate(-90)" font-family="Liberation Sans" font-size="9.5" fill="#3c3c3c" text-anchor="middle">17</text><text x="0" y="0" transform="translate(8.5 367.1) rotate(-90)" font-family="Liberation Sans" font-size="9.5" fill="#3c3c3c" text-anchor="middle">18</text><rect x="3" y="9.7" width="4.5" height="1" fill="#3c3c3c"/><rect x="3" y="30.1" width="4.5" height="1" fill="#3c3c3c"/><rect x="3" y="50.5" width="4.5" height="1" fill="#3c3c3c"/><rect x="3" y="70.9" width="4.5" height="1" fill="#3c3c3c"/><rect x="3" y="91.3" width="4.5" height="1" fill="#3c3c3c"/><rect x="3" y="111.7" width="4.5" height="1" fill="#3c3c3c"/><rect x="3" y="132.1" width="4.5" height="1" fill="#3c3c3c"/><rect x="3" y="152.5" width="4.5" height="1" fill="#3c3c3c"/><rect x="3" y="172.8" width="4.5" height="1" fill="#3c3c3c"/><rect x="3" y="193.2" width="4.5" height="1" fill="#3c3c3c"/><rect x="3" y="213.6" width="4.5" height="1" fill="#3c3c3c"/><rect x="3" y="234.0" width="4.5" height="1" fill="#3c3c3c"/><rect x="3" y="254.4" width="4.5" height="1" fill="#3c3c3c"/><rect x="3" y="274.8" width="4.5" height="1" fill="#3c3c3c"/><rect x="3" y="295.2" width="4.5" height="1" fill="#3c3c3c"/><rect x="3" y="315.6" width="4.5" height="1" fill="#3c3c3c"/><rect x="3" y="336.0" width="4.5" height="1" fill="#3c3c3c"/><rect x="3" y="356.4" width="4.5" height="1" fill="#3c3c3c"/><rect x="3" y="376.8" width="4.5" height="1" fill="#3c3c3c"/></svg>
<!-- vertical ruler -->

<!-- slide -->
<!--SLIDE-->
<svg style="left:0;top:0;width:0;height:0;position:absolute" width="0" height="0"><defs>
<radialGradient id="bgR" cx="60" cy="380" r="650" gradientUnits="userSpaceOnUse" gradientTransform="translate(60 380) scale(0.68 1) translate(-60 -380)">
 <stop offset="0" stop-color="#c23a20"/>
 <stop offset="0.22" stop-color="#b83220"/>
 <stop offset="0.46" stop-color="#7d2117"/>
 <stop offset="0.55" stop-color="#6a1a13"/>
 <stop offset="0.645" stop-color="#501612"/>
 <stop offset="0.83" stop-color="#3a100e"/>
 <stop offset="1" stop-color="#280806"/>
</radialGradient>
<linearGradient id="bgTop" x1="0" y1="0" x2="0" y2="1">
 <stop offset="0" stop-color="#1a0505" stop-opacity="0"/>
 <stop offset="0.45" stop-color="#1a0505" stop-opacity="0"/>
</linearGradient>
<linearGradient id="barrelG" x1="0" y1="0" x2="0" y2="1">
 <stop offset="0" stop-color="#1e1f22"/>
 <stop offset="0.25" stop-color="#6a6d72"/>
 <stop offset="0.45" stop-color="#3a3c40"/>
 <stop offset="1" stop-color="#1a1b1e"/>
</linearGradient>
<linearGradient id="silverG" x1="0" y1="0" x2="1" y2="1">
 <stop offset="0" stop-color="#f2f2f2"/>
 <stop offset="0.5" stop-color="#b9bcc0"/>
 <stop offset="1" stop-color="#6d7075"/>
</linearGradient>
<linearGradient id="gripG" x1="0" y1="0" x2="1" y2="1">
 <stop offset="0" stop-color="#a0765a"/>
 <stop offset="0.35" stop-color="#6a3d26"/>
 <stop offset="1" stop-color="#3d2014"/>
</linearGradient>
<linearGradient id="bulG" x1="0" y1="0" x2="0" y2="1">
 <stop offset="0" stop-color="#4a4d52"/>
 <stop offset="0.35" stop-color="#b4b7bb"/>
 <stop offset="1" stop-color="#45484c"/>
</linearGradient>
<linearGradient id="tipG" x1="0" y1="0" x2="0" y2="1">
 <stop offset="0" stop-color="#9a6a20"/>
 <stop offset="0.4" stop-color="#f0b850"/>
 <stop offset="1" stop-color="#8a5a18"/>
</linearGradient>
<filter id="blur6" x="-20%" y="-50%" width="140%" height="200%"><feGaussianBlur stdDeviation="6"/></filter><filter id="blur4" x="-20%" y="-80%" width="140%" height="260%"><feGaussianBlur stdDeviation="4"/></filter>
<filter id="blur2"><feGaussianBlur stdDeviation="1.5"/></filter></defs><symbol id="slideArt" viewBox="0 0 518 388"><rect width="518" height="388" fill="url(#bgR)"/><rect width="518" height="388" fill="url(#bgTop)"/><path d="M57.9 2.4 L59.3 2.5 L61.0 2.6 L63.1 2.7 L65.4 2.9 L67.8 3.0 L70.3 3.1 L72.7 3.2 L74.9 3.3 L77.2 3.3 L79.6 3.4 L82.1 3.4 L84.5 3.4 L86.8 3.4 L88.9 3.4 L90.6 3.4 L91.9 3.4 L92.1 -0.4 L90.7 -0.5 L89.0 -0.6 L86.9 -0.7 L84.6 -0.9 L82.2 -1.0 L79.7 -1.1 L77.3 -1.2 L75.1 -1.3 L72.8 -1.3 L70.4 -1.4 L67.9 -1.4 L65.5 -1.4 L63.2 -1.4 L61.1 -1.4 L59.4 -1.4 L58.1 -1.4 Z" fill="#f4f1ef" opacity="1"/><path d="M83.0 1.9 L82.9 2.4 L82.7 3.2 L82.4 4.0 L82.2 4.9 L81.9 5.8 L81.5 6.7 L81.2 7.5 L80.8 8.3 L80.5 9.0 L80.0 9.8 L79.6 10.6 L79.1 11.4 L78.6 12.1 L78.1 12.9 L77.5 13.6 L77.0 14.4 L76.4 15.1 L75.8 15.9 L75.1 16.7 L74.5 17.4 L73.9 18.0 L73.4 18.5 L73.0 18.9 L72.7 19.1 L72.5 19.2 L71.9 19.2 L71.2 19.1 L70.3 18.8 L69.4 18.5 L68.5 18.1 L67.8 17.8 L67.3 17.6 L66.7 18.4 L67.1 18.8 L67.6 19.4 L68.2 20.1 L69.0 20.8 L69.8 21.6 L70.8 22.2 L71.9 22.8 L73.3 22.9 L74.6 22.7 L75.7 22.2 L76.8 21.6 L77.7 20.9 L78.7 20.1 L79.5 19.3 L80.3 18.5 L81.0 17.6 L81.7 16.8 L82.4 15.9 L83.0 14.9 L83.5 13.9 L84.0 12.9 L84.5 11.8 L84.8 10.8 L85.2 9.7 L85.4 8.6 L85.4 7.4 L85.4 6.3 L85.3 5.2 L85.2 4.2 L85.1 3.3 L85.0 2.6 L85.0 2.1 Z" fill="#f4f1ef" opacity="1"/><path d="M92 2 Q92 18 82 23.5 Q75 25 70 21" fill="none" stroke="#f4f1ef" stroke-width="0.8"/><path d="M98.2 5.6 L98.7 5.6 L99.5 5.6 L100.3 5.6 L101.3 5.6 L102.3 5.6 L103.4 5.5 L104.5 5.4 L105.6 5.2 L106.8 4.9 L108.2 4.4 L109.6 3.9 L111.0 3.3 L112.4 2.8 L113.7 2.3 L114.7 1.9 L115.5 1.6 L114.5 -1.6 L113.7 -1.4 L112.6 -1.2 L111.3 -0.9 L109.8 -0.6 L108.3 -0.3 L106.9 0.1 L105.5 0.4 L104.4 0.8 L103.3 1.2 L102.3 1.7 L101.4 2.2 L100.5 2.7 L99.6 3.2 L98.9 3.7 L98.3 4.1 L97.8 4.4 Z" fill="#f4f1ef" opacity="1"/><path d="M252.9 0.2 L253.3 1.2 L253.9 2.6 L254.6 4.2 L255.3 6.1 L256.2 8.0 L257.1 10.1 L258.0 12.1 L258.8 14.0 L259.5 15.5 L260.1 17.3 L260.8 19.3 L261.5 21.5 L262.5 23.8 L263.7 26.3 L265.4 28.6 L267.5 30.8 L269.8 32.6 L272.4 34.0 L275.0 35.3 L277.7 36.3 L280.5 37.3 L283.3 38.2 L286.0 39.0 L288.7 39.7 L291.4 40.4 L294.2 41.0 L297.1 41.6 L299.9 42.1 L302.8 42.5 L305.8 42.8 L308.7 43.1 L311.7 43.4 L314.6 43.6 L317.6 43.8 L320.7 43.9 L323.8 44.0 L327.0 44.0 L330.2 43.9 L333.5 43.6 L336.9 43.1 L340.3 42.5 L343.7 41.6 L347.0 40.6 L350.3 39.5 L353.6 38.4 L356.9 37.2 L360.2 36.1 L363.6 34.9 L367.2 33.8 L370.9 32.6 L374.7 31.4 L378.5 30.1 L382.4 28.9 L386.2 27.6 L390.0 26.2 L393.8 24.9 L397.5 23.5 L401.2 22.0 L404.9 20.6 L408.5 19.1 L412.0 17.6 L415.5 16.2 L418.7 14.8 L421.8 13.5 L424.7 12.3 L427.5 11.2 L430.2 10.1 L432.8 9.0 L435.2 8.0 L437.5 7.0 L439.7 6.1 L441.7 5.2 L443.7 4.3 L445.5 3.5 L447.3 2.7 L448.9 1.9 L450.3 1.2 L451.6 0.5 L452.7 0.0 L453.5 -0.4 L450.5 -7.6 L449.6 -7.3 L448.5 -6.9 L447.1 -6.4 L445.6 -5.9 L444.0 -5.3 L442.2 -4.6 L440.3 -3.9 L438.3 -3.2 L436.2 -2.4 L434.0 -1.6 L431.7 -0.7 L429.2 0.2 L426.7 1.2 L424.0 2.3 L421.2 3.3 L418.2 4.5 L415.1 5.7 L411.8 7.0 L408.3 8.3 L404.7 9.7 L401.1 11.1 L397.5 12.5 L393.8 13.8 L390.2 15.1 L386.6 16.4 L382.9 17.7 L379.1 19.0 L375.2 20.2 L371.4 21.5 L367.7 22.7 L364.0 23.9 L360.4 25.1 L356.9 26.2 L353.5 27.4 L350.2 28.6 L347.0 29.6 L343.9 30.6 L340.9 31.5 L338.0 32.3 L335.1 32.9 L332.3 33.3 L329.4 33.6 L326.6 33.8 L323.7 33.9 L320.9 33.9 L318.0 33.9 L315.2 33.8 L312.3 33.6 L309.5 33.4 L306.8 33.2 L304.1 32.9 L301.4 32.5 L298.8 32.1 L296.2 31.5 L293.7 31.0 L291.3 30.3 L288.7 29.6 L286.2 28.8 L283.7 28.0 L281.3 27.1 L279.1 26.2 L277.2 25.2 L275.6 24.2 L274.5 23.2 L273.9 22.3 L273.4 21.2 L272.9 19.8 L272.6 18.2 L272.3 16.4 L272.0 14.4 L271.6 12.2 L271.2 10.0 L270.8 8.1 L270.5 6.1 L270.2 4.1 L269.9 2.1 L269.7 0.2 L269.5 -1.6 L269.3 -3.1 L269.1 -4.2 Z" fill="#f4f1ef" opacity="1"/><path d="M295.7 41.3 L297.3 41.8 L299.4 42.5 L302.0 43.4 L304.8 44.3 L307.9 45.3 L311.1 46.2 L314.3 47.1 L317.5 47.9 L320.6 48.6 L323.9 49.2 L327.3 49.9 L330.7 50.5 L334.2 51.0 L337.8 51.5 L341.3 51.9 L344.9 52.1 L348.3 52.2 L351.8 52.1 L355.3 52.0 L358.8 51.8 L362.2 51.5 L365.7 51.2 L369.1 50.7 L372.5 50.2 L375.9 49.6 L379.4 48.9 L382.9 48.2 L386.4 47.3 L389.8 46.4 L393.0 45.5 L396.0 44.6 L398.9 43.6 L401.4 42.6 L403.8 41.6 L405.9 40.6 L408.0 39.5 L409.8 38.4 L411.6 37.2 L413.4 36.0 L415.2 34.7 L417.0 33.2 L418.8 31.5 L420.6 29.7 L422.3 27.9 L423.9 26.2 L425.3 24.7 L426.5 23.3 L427.3 22.4 L426.7 21.6 L425.6 22.4 L424.2 23.4 L422.5 24.7 L420.7 26.1 L418.7 27.5 L416.7 28.9 L414.7 30.2 L412.8 31.3 L411.0 32.3 L409.2 33.3 L407.5 34.2 L405.7 35.1 L403.8 36.0 L401.8 36.8 L399.6 37.6 L397.1 38.4 L394.4 39.2 L391.5 40.0 L388.3 40.7 L385.0 41.5 L381.6 42.2 L378.2 42.8 L374.8 43.3 L371.5 43.8 L368.3 44.2 L365.0 44.5 L361.7 44.7 L358.4 44.9 L355.0 45.0 L351.7 45.0 L348.4 45.0 L345.1 44.9 L341.8 44.8 L338.5 44.5 L335.1 44.2 L331.7 43.8 L328.3 43.4 L324.9 43.0 L321.7 42.5 L318.5 42.1 L315.4 41.7 L312.2 41.2 L308.9 40.8 L305.8 40.3 L302.9 39.8 L300.2 39.4 L298.0 39.0 L296.3 38.7 Z" fill="#f4f1ef" opacity="1"/><path d="M330.8 48.4 L331.2 48.9 L331.6 49.4 L332.1 50.1 L332.7 50.9 L333.4 51.7 L334.0 52.5 L334.7 53.3 L335.4 54.1 L336.1 54.9 L337.0 55.8 L337.9 56.7 L338.8 57.6 L339.6 58.4 L340.4 59.2 L341.1 59.8 L341.6 60.3 L342.4 59.7 L342.1 59.1 L341.7 58.3 L341.2 57.3 L340.7 56.2 L340.2 55.0 L339.6 53.9 L339.1 52.8 L338.6 51.9 L338.1 51.0 L337.6 50.1 L337.1 49.2 L336.7 48.3 L336.2 47.4 L335.8 46.7 L335.4 46.0 L335.2 45.6 Z" fill="#f4f1ef" opacity="1"/><path d="M325.0 1.8 L325.7 2.8 L326.6 4.1 L327.6 5.5 L328.7 7.0 L329.7 8.5 L330.6 9.9 L331.3 11.0 L331.8 11.9 L332.1 12.8 L332.4 13.8 L332.6 14.9 L332.8 16.1 L332.9 17.3 L332.9 18.5 L332.9 19.7 L333.0 20.7 L333.0 21.6 L332.9 22.7 L332.6 23.9 L332.3 25.2 L331.9 26.5 L331.5 27.7 L331.1 28.8 L330.8 29.6 L335.2 32.4 L335.8 31.9 L336.6 31.2 L337.6 30.3 L338.7 29.3 L339.9 28.1 L341.1 26.7 L342.2 25.1 L343.0 23.3 L343.6 21.6 L344.1 19.9 L344.5 18.2 L344.7 16.3 L344.8 14.4 L344.8 12.3 L344.6 10.3 L344.2 8.1 L343.5 5.8 L342.5 3.6 L341.4 1.5 L340.3 -0.5 L339.2 -2.3 L338.3 -3.8 L337.5 -5.0 L337.0 -5.8 Z" fill="#f4f1ef" opacity="1"/><path d="M352 18 Q356 9 368 12 Q378 15 392 19 Q372 24 360 24 Q350 24 352 18 Z" fill="#f4f1ef"/><path d="M380.6 18.9 L382.5 18.2 L385.1 17.4 L388.1 16.5 L391.4 15.4 L395.0 14.3 L398.6 13.1 L402.2 11.9 L405.6 10.9 L409.0 9.8 L412.8 8.6 L416.7 7.3 L420.5 6.1 L424.2 4.9 L427.5 3.8 L430.3 2.9 L432.4 2.2 L431.6 -0.2 L429.5 0.3 L426.7 1.1 L423.3 2.0 L419.6 2.9 L415.7 4.0 L411.7 5.1 L407.9 6.1 L404.4 7.1 L401.0 8.2 L397.4 9.3 L393.8 10.4 L390.2 11.6 L386.8 12.7 L383.8 13.7 L381.3 14.5 L379.4 15.1 Z" fill="#f4f1ef" opacity="1"/><path d="M252 4 Q246 18 256 29 Q262 20 258 8" fill="none" stroke="#f4f1ef" stroke-width="0.7"/><path d="M276 -2 Q268 18 286 24 Q302 26 298 -2" fill="none" stroke="#f4f1ef" stroke-width="0.8"/><path d="M305 -2 Q322 12 312 28 Q302 32 296 30" fill="none" stroke="#f4f1ef" stroke-width="0.8"/><path d="M345 20 Q380 28 430 6" fill="none" stroke="#f4f1ef" stroke-width="0.6"/><path d="M469 0 Q488 14.5 507 0 L500 0 Q488 5 477 0 Z" fill="#f4f1ef"/><path d="M461.5 0 Q487 27 515 0" fill="none" stroke="#f4f1ef" stroke-width="0.9"/><path d="M491.8 47.5 L491.5 46.8 L491.1 45.9 L490.6 44.8 L490.2 43.7 L489.8 42.6 L489.6 41.7 L489.7 41.2 L489.9 41.4 L490.0 41.5 L490.3 41.3 L490.8 40.9 L491.4 40.5 L492.0 40.1 L492.6 39.8 L493.2 39.6 L493.5 39.5 L493.9 39.5 L494.7 39.6 L495.7 39.8 L496.8 40.0 L497.9 40.3 L498.9 40.7 L499.6 40.9 L499.7 40.9 L499.7 40.4 L499.9 40.4 L500.0 40.8 L500.1 41.5 L500.0 42.4 L499.9 43.2 L499.8 44.0 L499.8 44.6 L502.2 45.4 L502.5 45.0 L502.9 44.5 L503.4 43.7 L504.0 42.8 L504.6 41.8 L505.0 40.5 L505.0 38.9 L504.3 37.1 L503.1 35.9 L501.9 35.0 L500.5 34.3 L499.0 33.6 L497.5 33.1 L495.9 32.6 L494.2 32.4 L492.5 32.5 L490.9 32.8 L489.5 33.5 L488.2 34.3 L487.0 35.3 L486.0 36.3 L485.1 37.6 L484.5 38.9 L484.1 40.6 L484.4 42.4 L485.1 43.8 L486.1 44.9 L487.1 45.9 L488.1 46.8 L489.0 47.5 L489.7 48.1 L490.2 48.5 Z" fill="#f4f1ef" opacity="1"/><path d="M487 80 Q484 60 492 50 Q500 42 518 42 L518 80 Z" fill="#f4f1ef"/><path d="M494 43 Q488 60 499 78" fill="none" stroke="#2a0707" stroke-width="1.6"/><circle cx="514" cy="63" r="10.5" fill="#2a0707"/><circle cx="514" cy="63" r="7.5" fill="none" stroke="#f4f1ef" stroke-width=".9"/><path d="M512 58 Q506 64 512 70" fill="none" stroke="#f4f1ef" stroke-width="1.6"/><path d="M518.3 73.5 L516.6 73.4 L514.3 73.3 L511.5 73.2 L508.4 73.1 L505.1 72.9 L501.7 72.9 L498.3 72.8 L495.0 72.8 L492.0 72.9 L488.8 72.9 L485.6 73.0 L482.4 73.2 L479.1 73.4 L475.7 73.6 L472.5 74.0 L469.2 74.5 L466.0 75.2 L462.9 75.9 L459.7 76.8 L456.7 77.7 L453.7 78.7 L450.8 79.7 L448.1 80.7 L445.5 81.7 L442.9 82.8 L440.5 83.9 L438.2 85.1 L435.9 86.3 L433.9 87.4 L431.9 88.6 L430.0 89.7 L428.3 90.9 L426.6 92.0 L424.9 93.3 L423.4 94.5 L421.9 95.8 L420.7 96.9 L419.6 97.9 L418.6 98.7 L417.9 99.4 L420.1 102.6 L421.0 102.2 L422.1 101.6 L423.4 101.0 L424.9 100.2 L426.5 99.5 L428.2 98.7 L430.0 97.9 L431.7 97.1 L433.6 96.3 L435.5 95.4 L437.5 94.5 L439.6 93.6 L441.7 92.7 L443.9 91.9 L446.2 91.0 L448.5 90.3 L451.1 89.6 L453.7 88.8 L456.5 88.1 L459.3 87.4 L462.2 86.8 L465.1 86.3 L468.0 85.8 L470.8 85.5 L473.6 85.2 L476.6 85.1 L479.6 85.0 L482.6 85.0 L485.7 85.0 L488.9 85.0 L491.9 85.1 L495.0 85.2 L498.0 85.3 L501.2 85.4 L504.5 85.6 L507.7 85.8 L510.8 86.0 L513.5 86.2 L515.9 86.4 L517.7 86.5 Z" fill="#f4f1ef" opacity="1"/><path d="M450.3 80.6 L451.2 80.3 L452.3 79.9 L453.7 79.5 L455.2 78.9 L456.8 78.4 L458.4 77.7 L460.0 77.0 L461.4 76.2 L462.7 75.3 L464.2 74.1 L465.6 72.8 L467.0 71.5 L468.4 70.3 L469.5 69.1 L470.5 68.1 L471.3 67.4 L470.7 66.6 L469.8 67.0 L468.5 67.4 L466.9 68.0 L465.2 68.7 L463.4 69.4 L461.7 70.2 L460.1 71.0 L458.6 71.8 L457.3 72.7 L456.0 73.7 L454.7 74.8 L453.4 75.9 L452.3 77.0 L451.2 78.0 L450.3 78.8 L449.7 79.4 Z" fill="#f4f1ef" opacity="1"/><path d="M489.9 86.1 L488.9 85.9 L487.4 85.7 L485.6 85.4 L483.5 85.1 L481.3 84.8 L479.1 84.8 L476.8 84.9 L474.7 85.3 L472.7 86.1 L470.9 87.0 L469.2 88.2 L467.7 89.4 L466.2 90.8 L465.0 92.4 L463.9 94.1 L463.2 96.1 L463.0 98.3 L463.4 100.2 L464.0 102.0 L465.0 103.7 L466.1 105.2 L467.3 106.6 L468.7 107.8 L470.3 108.8 L472.2 109.5 L474.1 110.0 L476.1 110.2 L478.1 110.3 L480.0 110.3 L481.9 110.2 L483.6 110.1 L485.0 109.9 L486.4 109.7 L487.7 109.3 L488.8 108.8 L489.7 108.2 L490.5 107.7 L491.2 107.2 L491.7 106.8 L492.2 106.5 L491.8 105.5 L491.3 105.6 L490.6 105.7 L489.8 105.9 L488.9 106.0 L488.0 106.2 L487.0 106.2 L486.0 106.2 L485.0 106.1 L483.6 105.9 L482.1 105.6 L480.4 105.4 L478.7 105.1 L477.0 104.7 L475.6 104.2 L474.4 103.7 L473.7 103.2 L473.0 102.6 L472.4 101.8 L471.8 101.0 L471.3 100.1 L470.9 99.2 L470.8 98.5 L470.8 98.0 L470.8 97.9 L470.9 97.7 L471.3 97.2 L472.0 96.4 L473.0 95.6 L474.0 94.7 L475.2 93.9 L476.3 93.2 L477.3 92.7 L478.4 92.2 L479.9 91.7 L481.7 91.3 L483.6 90.9 L485.5 90.6 L487.3 90.4 L488.9 90.1 L490.1 89.9 Z" fill="#f4f1ef" opacity="1"/><path d="M445.6 117.8 L445.5 116.9 L445.2 115.8 L444.9 114.4 L444.6 113.0 L444.4 111.5 L444.3 110.2 L444.4 109.1 L444.6 108.3 L444.9 107.6 L445.4 106.6 L446.0 105.6 L446.8 104.6 L447.5 103.6 L448.3 102.8 L449.0 102.2 L449.6 101.8 L450.1 101.6 L451.0 101.3 L452.0 101.1 L453.2 101.0 L454.3 101.0 L455.4 101.0 L456.2 101.1 L456.6 101.2 L456.8 101.3 L457.1 101.6 L457.5 102.2 L457.7 102.9 L458.0 103.7 L458.1 104.4 L458.2 105.0 L458.3 105.1 L458.4 105.1 L458.2 105.4 L457.7 105.8 L456.9 106.2 L456.0 106.6 L455.1 106.9 L454.4 107.1 L453.9 107.4 L454.1 108.6 L454.7 108.6 L455.4 108.6 L456.3 108.7 L457.4 108.7 L458.5 108.6 L459.6 108.4 L460.8 107.9 L461.7 106.9 L462.2 105.6 L462.4 104.4 L462.4 103.2 L462.3 101.8 L461.9 100.5 L461.4 99.2 L460.6 97.9 L459.4 96.8 L458.0 96.1 L456.5 95.6 L455.0 95.2 L453.3 95.0 L451.6 94.9 L449.8 95.1 L448.1 95.5 L446.4 96.2 L445.0 97.2 L443.7 98.4 L442.6 99.7 L441.6 101.2 L440.8 102.7 L440.1 104.3 L439.7 106.0 L439.4 107.7 L439.6 109.4 L440.1 111.1 L440.8 112.7 L441.6 114.1 L442.5 115.5 L443.3 116.6 L444.0 117.5 L444.4 118.2 Z" fill="#f4f1ef" opacity="1"/><path d="M461 104 Q462 116 448 118" fill="none" stroke="#f4f1ef" stroke-width="0.7"/><path d="M420.2 101.5 L419.6 101.8 L418.7 102.1 L417.6 102.5 L416.3 103.0 L415.0 103.5 L413.7 104.1 L412.4 104.6 L411.2 105.2 L410.1 105.8 L409.0 106.4 L407.8 107.0 L406.7 107.6 L405.6 108.3 L404.5 109.1 L403.5 110.0 L402.7 111.0 L402.1 112.1 L401.6 113.3 L401.2 114.6 L401.0 115.8 L400.8 117.1 L400.8 118.2 L400.9 119.3 L401.0 120.2 L401.5 121.1 L402.1 121.8 L402.8 122.3 L403.5 122.6 L404.3 122.9 L404.9 123.1 L405.4 123.3 L405.7 123.5 L406.3 122.5 L405.9 122.3 L405.4 122.0 L404.8 121.7 L404.2 121.4 L403.7 121.0 L403.3 120.6 L403.0 120.2 L403.0 119.8 L403.0 119.2 L403.1 118.4 L403.3 117.4 L403.5 116.4 L403.9 115.4 L404.3 114.5 L404.8 113.6 L405.3 113.0 L405.9 112.4 L406.6 111.9 L407.5 111.3 L408.4 110.7 L409.5 110.2 L410.6 109.7 L411.7 109.2 L412.8 108.8 L413.9 108.4 L415.1 108.0 L416.4 107.7 L417.7 107.4 L418.9 107.1 L420.1 106.9 L421.0 106.7 L421.8 106.5 Z" fill="#f4f1ef" opacity="1"/><path d="M492 85 Q505 90 518 97" fill="none" stroke="#f4f1ef" stroke-width="0.9"/><path d="M420.4 98.6 L419.9 99.7 L419.2 101.1 L418.4 102.9 L417.4 104.9 L416.5 107.2 L415.6 109.5 L414.9 112.0 L414.5 114.5 L414.3 117.0 L414.3 119.4 L414.5 121.8 L414.8 124.2 L415.2 126.5 L415.6 128.8 L416.1 131.0 L416.6 133.0 L417.1 135.0 L417.6 136.9 L418.2 138.9 L418.8 140.8 L419.5 142.6 L420.4 144.5 L421.3 146.3 L422.4 148.2 L423.7 150.1 L425.2 151.9 L426.8 153.7 L428.4 155.5 L430.0 157.0 L431.4 158.4 L432.5 159.5 L433.3 160.4 L438.7 155.6 L437.9 154.7 L436.8 153.4 L435.5 151.9 L434.2 150.3 L432.9 148.6 L431.6 146.9 L430.5 145.3 L429.6 143.8 L428.9 142.4 L428.3 140.9 L427.7 139.4 L427.2 137.9 L426.7 136.3 L426.3 134.6 L425.8 132.8 L425.4 131.0 L425.0 129.0 L424.6 127.0 L424.3 125.0 L423.9 122.9 L423.7 120.9 L423.5 119.0 L423.5 117.1 L423.5 115.5 L423.7 113.8 L424.1 112.0 L424.7 110.0 L425.3 108.0 L426.0 106.0 L426.7 104.2 L427.2 102.6 L427.6 101.4 Z" fill="#f4f1ef" opacity="1"/><path d="M430 156 Q440 156 452 160 Q464 165 461 172 Q455 175 443 171 Q433 166 430 156 Z" fill="#f4f1ef"/><path d="M451.6 157.8 L451.6 156.9 L451.4 155.6 L451.3 154.1 L451.1 152.5 L451.0 150.9 L451.1 149.4 L451.3 148.3 L451.5 147.7 L451.9 147.2 L452.4 146.5 L453.0 145.9 L453.7 145.2 L454.5 144.7 L455.2 144.3 L455.8 144.0 L456.2 143.9 L456.7 143.9 L457.5 144.1 L458.7 144.4 L459.8 144.9 L461.0 145.5 L461.9 146.1 L462.6 146.6 L462.9 146.9 L463.1 147.2 L463.1 147.9 L463.0 148.9 L462.8 150.1 L462.4 151.3 L461.9 152.5 L461.4 153.4 L461.1 154.1 L460.7 154.5 L460.3 154.8 L459.6 155.0 L458.8 155.1 L458.0 155.2 L457.2 155.2 L456.5 155.3 L456.0 155.4 L456.0 156.6 L456.5 156.7 L457.1 156.8 L457.9 156.9 L458.8 157.0 L459.8 157.0 L460.9 156.9 L462.0 156.5 L462.9 155.9 L463.8 155.0 L464.6 154.0 L465.4 152.8 L466.1 151.4 L466.7 150.0 L467.2 148.4 L467.4 146.8 L467.1 145.1 L466.3 143.6 L465.2 142.3 L463.9 141.2 L462.4 140.2 L460.9 139.4 L459.2 138.7 L457.6 138.2 L455.8 138.1 L454.1 138.4 L452.6 139.0 L451.2 139.8 L449.9 140.8 L448.8 141.9 L447.8 143.3 L447.0 144.7 L446.5 146.3 L446.4 148.1 L446.7 149.9 L447.3 151.6 L448.0 153.3 L448.7 154.8 L449.4 156.2 L450.0 157.3 L450.4 158.2 Z" fill="#f4f1ef" opacity="1"/><path d="M455.5 173.2 L456.3 173.5 L457.4 174.0 L458.6 174.5 L460.0 175.1 L461.4 175.7 L462.8 176.3 L464.2 176.9 L465.3 177.5 L466.4 178.0 L467.6 178.6 L468.7 179.2 L469.8 179.9 L470.8 180.4 L471.7 181.0 L472.5 181.4 L473.1 181.7 L474.9 178.3 L474.3 178.0 L473.5 177.6 L472.5 177.1 L471.5 176.6 L470.3 176.1 L469.1 175.6 L467.9 175.0 L466.7 174.5 L465.4 174.0 L464.0 173.5 L462.5 172.9 L461.0 172.4 L459.6 171.9 L458.3 171.5 L457.3 171.1 L456.5 170.8 Z" fill="#f4f1ef" opacity="1"/><path d="M468 178 Q486 186 490 208 Q482 200 476 203 Q468 198 468 178 Z" fill="none" stroke="#f4f1ef" stroke-width="1.6"/><path d="M474 186 Q480 193 478 198 Q472 196 474 186 Z" fill="#f4f1ef"/><path d="M472.9 205.2 L473.5 205.8 L474.4 206.6 L475.4 207.5 L476.5 208.5 L477.6 209.5 L478.8 210.7 L479.8 211.8 L480.7 212.9 L481.5 214.2 L482.4 215.5 L483.2 216.9 L484.0 218.4 L484.8 219.9 L485.5 221.5 L486.2 223.0 L486.8 224.4 L487.3 225.9 L487.7 227.5 L488.1 229.2 L488.4 230.9 L488.7 232.5 L489.0 233.9 L489.2 235.2 L489.4 236.1 L490.6 235.9 L490.6 235.0 L490.5 233.8 L490.4 232.3 L490.3 230.6 L490.2 228.9 L490.0 227.1 L489.6 225.3 L489.2 223.6 L488.7 222.0 L488.1 220.4 L487.5 218.7 L486.7 217.1 L485.9 215.5 L485.1 213.9 L484.2 212.4 L483.3 211.1 L482.3 209.7 L481.2 208.4 L479.9 207.2 L478.7 206.0 L477.6 205.0 L476.6 204.1 L475.7 203.4 L475.1 202.8 Z" fill="#f4f1ef" opacity="1"/><path d="M140 306 L478 246 L490 258 L160 326 Z" fill="#0a0202" opacity=".8" filter="url(#blur4)"/><path d="M8.6 300 L37 302.5 L44.4 310 L43 321 L29.6 312.4 L14.8 305 Z" fill="#4a4c50"/><path d="M8.6 300 L37 302.5 L40 306 L18 304.5 Z" fill="#a0a3a8"/><path d="M136 281 L476 230.6 Q481 240 478 250.4 L136 298 Z" fill="url(#barrelG)"/><path d="M136 284 L476 233 L476 236.5 L136 288.5 Z" fill="#a5a8ad" opacity=".6"/><path d="M446 234 L458 224 L470 223 L470 232 Z" fill="#6a6d72"/><ellipse cx="477" cy="240" rx="4" ry="10" fill="#a5a8ad"/><ellipse cx="477.5" cy="240" rx="2.2" ry="6.5" fill="#2a2b2e"/><path d="M136 297 L200 288 Q207 294 203 301 L136 310 Z" fill="url(#barrelG)"/><path d="M136 299.5 L199 290.5 L200 293.5 L136 303 Z" fill="#8d9096" opacity=".7"/><ellipse cx="202" cy="294.5" rx="3" ry="6.5" fill="#8d9096"/><path d="M43 289 Q43 276.7 56.7 275.4 L135.5 273 Q147.9 273 147.9 285.3 L147.9 310 Q147.9 317.3 140.5 318.6 Q150.3 324.7 145.4 334.6 L133 344.4 L51.7 374 L37 388 L0 388 L0 351.8 L27.1 332 L43.1 317.3 Z" fill="url(#silverG)"/><path d="M56.7 275.4 L135.5 273 Q146 273 147.9 282 L60 287 Q46 287 56.7 275.4 Z" fill="#fbfbfb"/><path d="M0 360 L30 340 L50 334 L140 322 L145 334.6 L133 344.4 L51.7 374 L37 388 L0 388 Z" fill="#9a9da2" opacity=".55"/><path d="M51.7 295 L113.4 286.5 Q120.7 287.7 120.7 300 L122 334.6 Q120.7 342 113.4 342 L66.5 347 Q51.7 347 49.3 334.6 L48 307.5 Q48 296.4 51.7 295 Z" fill="#2c2e32"/><path d="M56.7 289.5 L113.4 284 L113.4 289 L56.7 295 Z" fill="#5a5d62"/><path d="M71.5 317.3 L108.4 310 Q112 316 108.4 318.6 L71.5 324.7 Q68 321 71.5 317.3 Z" fill="#8a8d92"/><path d="M60 300 L64 299 L66 306 L61 307 Z" fill="#777"/><path d="M106 283 L136 279 Q142 295 138 318 L110 322 Q104 302 106 283 Z" fill="#c6c9cd"/><path d="M108 294 L138 290 L139 300 L110 304 Z" fill="#8a8d92"/><ellipse cx="141.7" cy="294" rx="5" ry="16" fill="#b0b3b8"/><circle cx="113.4" cy="321" r="4.5" fill="#d8dadd"/><circle cx="31" cy="336" r="1.4" fill="#555"/><circle cx="57" cy="359" r="1.4" fill="#555"/><circle cx="103" cy="347" r="1.4" fill="#555"/><circle cx="127" cy="329" r="1.4" fill="#555"/><path d="M0 357 Q6 346 12.6 342.5 Q30 336 44 343 Q57 352 66 365 L45.6 376.5 L40 388 L0 388 Z" fill="url(#gripG)"/><path d="M0 366 Q14 346 31 345.5 Q38 352 41 372" fill="none" stroke="#d9a880" stroke-width="2.6" opacity=".9"/><path d="M0 368 Q14 350 30 349" fill="none" stroke="#f4e0c8" stroke-width="1" opacity=".9"/><path d="M14 388 Q16 378 24 372 Q30 368 32 374 Q30 378 26 376 M22 388 Q24 382 30 380 Q34 382 32 386 M8 382 Q12 386 16 383 M27 368 Q31 362 35 366" fill="none" stroke="#efe2b0" stroke-width="1.4"/><path d="M54.2 388 Q59 361.7 81.3 354.3 L115.8 349.4 Q125.7 351.8 120.7 369 L108.4 388 L98.6 388 L111 369 Q113.4 361.7 103.5 361.7 L81.3 365.4 Q66.5 371.5 64 388 Z" fill="#9ea1a6"/><path d="M56 388 Q60 366 80 357 L84 360 Q66 370 62 388 Z" fill="#d8dadd" opacity=".8"/><path d="M74 388 Q79 369 91.2 364 Q83.8 374 82.6 388 Z" fill="#3a3c40"/><g transform="translate(441 278) rotate(10) scale(.95 .92)"><rect x="2" y="3" width="36" height="12" fill="#000" opacity=".4" filter="url(#blur2)"/><rect x="0" y="0" width="25" height="12" fill="url(#bulG)"/><rect x="0" y="-0.5" width="2.2" height="13" fill="#55585c"/><path d="M24 0 Q35 0 37 6 Q35 12 24 12 Z" fill="url(#tipG)"/></g><g transform="translate(426 294) rotate(-10) scale(.95 .92)"><rect x="2" y="3" width="36" height="12" fill="#000" opacity=".4" filter="url(#blur2)"/><rect x="0" y="0" width="25" height="12" fill="url(#bulG)"/><rect x="0" y="-0.5" width="2.2" height="13" fill="#55585c"/><path d="M24 0 Q35 0 37 6 Q35 12 24 12 Z" fill="url(#tipG)"/></g><g transform="translate(387 332) rotate(4) scale(.95 .92)"><rect x="2" y="3" width="36" height="12" fill="#000" opacity=".4" filter="url(#blur2)"/><rect x="11" y="0" width="25" height="12" fill="url(#bulG)"/><rect x="33.8" y="-0.5" width="2.2" height="13" fill="#55585c"/><path d="M12 0 Q1 0 -1 6 Q1 12 12 12 Z" fill="url(#tipG)"/></g><text x="40" y="124" font-family="Liberation Serif" font-weight="bold" font-size="58.5" fill="#fff" stroke="#fff" stroke-width="0.9" textLength="297" lengthAdjust="spacingAndGlyphs">How They</text><text x="41" y="175.5" font-family="Liberation Serif" font-size="49.6" fill="#fff" stroke="#fff" stroke-width="0.4" textLength="224" lengthAdjust="spacingAndGlyphs">Throw Out</text><text x="40" y="228" font-family="Liberation Serif" font-size="49.6" fill="#fff" stroke="#fff" stroke-width="0.4" textLength="241" lengthAdjust="spacingAndGlyphs">a Challenge</text></symbol></svg>
<svg style="left:398px;top:164px" width="518" height="388" viewBox="0 0 518 388"><use href="#slideArt" width="518" height="388"/>
<g fill="none" stroke="#a9a9a9" stroke-width="1" stroke-dasharray="5 3">
<rect x="34.5" y="71.5" width="456" height="171"/>
</g>
<line x1="262.5" y1="53" x2="262.5" y2="71" stroke="#a3a3a3"/>
<circle cx="262" cy="47" r="10.3" fill="#fff"/>
<path d="M256 47 A6 6 0 1 1 262 53" fill="none" stroke="#a3a3a3" stroke-width="1"/>
<path d="M253.8 48 L258.2 48 L256 44.8 Z" fill="#a3a3a3"/>
<circle cx="262" cy="47" r="1.7" fill="none" stroke="#a3a3a3" stroke-width=".9"/>
<g fill="#fff" stroke="#a0a0a0" stroke-width="1">
<rect x="30.5" y="67.5" width="8" height="8"/><rect x="258.5" y="67.5" width="8" height="8"/><rect x="486.5" y="67.5" width="8" height="8"/>
<rect x="30.5" y="152.5" width="8" height="8"/><rect x="486.5" y="152.5" width="8" height="8"/>
<rect x="30.5" y="238.5" width="8" height="8"/><rect x="258.5" y="238.5" width="8" height="8"/><rect x="486.5" y="238.5" width="8" height="8"/>
</g>
<rect x="105.3" y="184" width="1.2" height="56" fill="#f2f2f2"/>
</svg>
<div class="badge" style="left:535.5px;top:171px">7</div>
<!--/SLIDE-->
<!-- editor scrollbar -->
<div class="a" style="left:996px;top:125px;width:12px;height:12px;border:1px solid #d5d5d5;background:#f1f1f1"></div>
<svg style="left:998px;top:128px" width="8" height="5" viewBox="0 0 8 5"><path d="M0 5 L4 0.5 L8 5 Z" fill="#b3b3b3"/></svg>
<div class="a" style="left:996px;top:139px;width:12px;height:51px;border:1px solid #d5d5d5;background:#f1f1f1"></div>
<div class="a" style="left:996px;top:554px;width:12px;height:12px;border:1px solid #d5d5d5;background:#f1f1f1"></div>
<svg style="left:998px;top:558px" width="8" height="5" viewBox="0 0 8 5"><path d="M0 0 L4 4.5 L8 0 Z" fill="#b3b3b3"/></svg>
<!-- notes -->
<div class="a" style="left:300px;top:586px;width:710px;height:1px;background:#cbcbcb"></div>
<div class="a" style="left:321px;top:597px;font:17.6px/20px 'Liberation Serif',serif;color:#f7f7f7;white-space:nowrap">Cliquez pour ajouter des notes</div>
<div class="a" style="left:996px;top:588px;width:12px;height:11px;border:1px solid #d5d5d5;background:#f1f1f1"></div>
<svg style="left:998px;top:591px" width="8" height="5" viewBox="0 0 8 5"><path d="M0 5 L4 0.5 L8 5 Z" fill="#b3b3b3"/></svg>
<div class="a" style="left:996px;top:601px;width:12px;height:8px;border:1px solid #d5d5d5;background:#f1f1f1"></div>
<div class="a" style="left:996px;top:611px;width:12px;height:11px;border:1px solid #d5d5d5;background:#f1f1f1"></div>
<svg style="left:998px;top:614px" width="8" height="5" viewBox="0 0 8 5"><path d="M0 0 L4 4.5 L8 0 Z" fill="#b3b3b3"/></svg>
<div class="badge" style="left:299px;top:199px">6</div>
<div class="badge" style="left:442.5px;top:119.5px">6</div>
<div class="badge" style="left:986.5px;top:145.5px">8</div>

<!-- RIGHT SIDEBAR -->
<div id="rsb" class="a"></div>
<svg style="left:1023px;top:145px" width="16" height="15" viewBox="0 0 16 15" fill="none" stroke="#333" stroke-width="1.1">
 <rect x="0.6" y="0.6" width="14.8" height="13.8"/><rect x="3" y="3" width="10" height="9"/>
</svg>
<svg style="left:1023px;top:183px" width="16" height="16" viewBox="0 0 16 16" fill="none" stroke="#333" stroke-width="1.1">
 <path d="M6 10 H0.6 V0.6 H10 V5"/><circle cx="10" cy="10" r="5.3" fill="#f1f1f1"/>
</svg>
<svg style="left:1023px;top:220px" width="16" height="16" viewBox="0 0 16 16" fill="none" stroke="#a6a6a6" stroke-width="1.1">
 <rect x="0.6" y="0.6" width="14.8" height="14.8"/><circle cx="4.5" cy="4.5" r="1.4"/><path d="M0.6 12 L5 8 L8 10.5 L11 7 L15.4 11"/>
</svg>
<div class="a" style="left:1025px;top:258px;font:bold 16px/16px 'Liberation Sans',sans-serif;color:#333">¶</div>
<svg style="left:1022px;top:299px" width="17" height="12" viewBox="0 0 17 12" fill="none" stroke="#a6a6a6" stroke-width="1">
 <rect x="0.5" y="0.5" width="16" height="11"/><path d="M0.5 4 H16.5 M0.5 7.5 H16.5 M5.8 0.5 V11.5 M11.2 0.5 V11.5"/>
</svg>
<svg style="left:1024px;top:334px" width="14" height="16" viewBox="0 0 14 16" fill="none" stroke="#a6a6a6" stroke-width="1">
 <rect x="0.5" y="11.5" width="2.5" height="4"/><rect x="5.5" y="7.5" width="2.5" height="8"/><rect x="10.5" y="0.5" width="2.5" height="15"/>
</svg>
<div class="a" style="left:1024px;top:371px;font:14px/14px 'Liberation Sans',sans-serif;color:#333;letter-spacing:-1px">T<span style="font-size:11px">a</span></div>
<svg style="left:1024px;top:385px" width="14" height="5" viewBox="0 0 14 5" fill="none" stroke="#333" stroke-width="1"><path d="M1 4.5 Q7 -1 13 4.5"/></svg>
<div class="badge" style="left:1015px;top:452px">5</div>

<!-- STATUS BAR -->
<div id="status" class="a"></div>
<svg style="left:12px;top:630px" width="15" height="13" viewBox="0 0 15 13" fill="none" stroke="#333" stroke-width="1.1">
 <rect x="0.6" y="0.6" width="13.8" height="11.8"/><path d="M5 3 L10.5 6.5 L5 10 Z" fill="#333" stroke="none"/>
</svg>
<svg style="left:32px;top:635px" width="6" height="4" viewBox="0 0 6 4" fill="none" stroke="#444" stroke-width="1"><path d="M0.5 0.5 L3 3 L5.5 0.5"/></svg>
<div class="t11" style="left:49.5px;top:630.5px">Diapositive 1 de 8</div>
<div class="badge" style="left:260.5px;top:624.5px">3</div>
<div class="t11" style="left:289.5px;top:630.5px">Toutes les modifications sont enregistrées</div>
<div class="t11" style="left:650.5px;top:630.5px">English – United States</div>
<svg style="left:770px;top:635px" width="6" height="4" viewBox="0 0 6 4" fill="none" stroke="#444" stroke-width="1"><path d="M0.5 0.5 L3 3 L5.5 0.5"/></svg>
<svg style="left:786px;top:630px" width="15" height="15" viewBox="0 0 15 15" fill="none" stroke="#333" stroke-width="1">
 <circle cx="7.5" cy="7.5" r="6.8"/><ellipse cx="7.5" cy="7.5" rx="3" ry="6.8"/><path d="M7.5 0.7 V14.3 M0.7 7.5 H14.3 M1.8 4 H13.2 M1.8 11 H13.2"/>
</svg>
<div class="a" style="left:812px;top:627px;width:21px;height:20px;background:#7e868d"></div>
<div class="a" style="left:815px;top:629px;font:bold 7px/8px 'Liberation Sans',sans-serif;color:#fff;letter-spacing:-.3px">ABC</div>
<svg style="left:818px;top:636px" width="11" height="8" viewBox="0 0 11 8" fill="none" stroke="#fff" stroke-width="1.3"><path d="M0.5 3.5 L4 7 L10.5 0.5"/></svg>
<div class="sep" style="left:842px;top:627px;height:20px"></div>
<div class="a" style="left:852px;top:627px;width:20px;height:20px;background:#7e868d"></div>
<svg style="left:855px;top:630px" width="14" height="14" viewBox="0 0 14 14" fill="none" stroke="#fff" stroke-width="1">
 <rect x="0.5" y="0.5" width="13" height="13"/><path d="M3 3 L5.5 5.5 M11 3 L8.5 5.5 M3 11 L5.5 8.5 M11 11 L8.5 8.5"/><path d="M3 3 H5 M3 3 V5 M11 3 H9 M11 3 V5 M3 11 H5 M3 11 V9 M11 11 H9 M11 11 V9"/>
</svg>
<svg style="left:884px;top:631px" width="18" height="12" viewBox="0 0 18 12" fill="none" stroke="#333" stroke-width="1.1">
 <path d="M0.6 0 V12 M17.4 0 V12 M3 6 H15 M5.5 3.5 L3 6 L5.5 8.5 M12.5 3.5 L15 6 L12.5 8.5"/>
</svg>
<div class="a" style="left:918px;top:636px;width:11px;height:1.2px;background:#333"></div>
<div class="t11" style="left:950px;top:630.5px">Zoom 54%</div>
<svg style="left:1024px;top:631px" width="12" height="12" viewBox="0 0 12 12" fill="none" stroke="#222" stroke-width="1.3"><path d="M5.5 0 V12 M0 5.5 H12"/></svg>

</body></html>
